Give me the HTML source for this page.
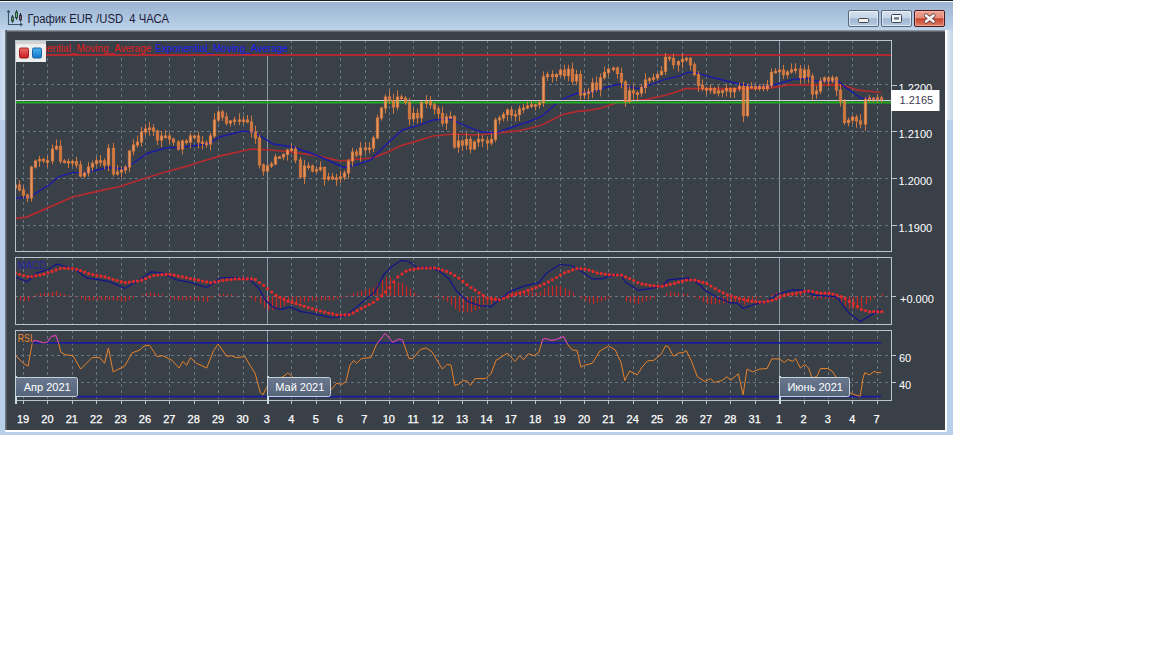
<!DOCTYPE html>
<html><head><meta charset="utf-8">
<style>
html,body{margin:0;padding:0;background:#ffffff;width:1152px;height:648px;overflow:hidden;}
#frame{position:absolute;left:0;top:0;width:953px;height:435px;background:#b9d0ea;}
#topline{position:absolute;left:0;top:0;width:953px;height:1px;background:#1a1c20;}
#whiteline{position:absolute;left:0;top:1px;width:953px;height:1px;background:#f4f8fc;}
#titlebar{position:absolute;left:0;top:2px;width:953px;height:28px;background:linear-gradient(#9ab3d1,#bcd3ea);}
#title{position:absolute;left:27px;top:10px;font-family:"Liberation Sans",sans-serif;font-size:12px;color:#1c1c3a;white-space:pre;}
#panel{position:absolute;left:5px;top:30px;width:940px;height:400px;background:#3a4048;}
#pshadowt{position:absolute;left:5px;top:30px;width:940px;height:2px;background:linear-gradient(#a0a8b0,#4c525a);}
#pshadowl{position:absolute;left:5px;top:30px;width:2px;height:400px;background:linear-gradient(90deg,#7a8088,#4a5058);}
#pwr{position:absolute;left:945px;top:30px;width:2px;height:402px;background:#ffffff;}
#pwb{position:absolute;left:5px;top:430px;width:942px;height:2px;background:#ffffff;}
.btn{position:absolute;top:10px;height:17px;box-sizing:border-box;border:1px solid #56667c;border-radius:2px;box-shadow:inset 0 0 0 1px rgba(255,255,255,0.55);background:linear-gradient(#d6e2f0 0%,#c6d6e8 45%,#9fb7d2 52%,#b6cae0 100%);}
#bclose{border-color:#4a1a1c;box-shadow:inset 0 0 0 1px rgba(255,200,190,0.5);background:linear-gradient(#eea494 0%,#e48c7a 45%,#c8442e 52%,#de8068 100%);}
svg{position:absolute;left:0;top:0;}
</style></head><body>
<div id="frame"></div>
<div id="topline"></div>
<div id="whiteline"></div>
<div id="titlebar"></div>
<div style="position:absolute;left:0;top:30px;width:5px;height:90px;background:linear-gradient(90deg,#c4d6ea,#d4e2f0);"></div>
<div style="position:absolute;left:947px;top:30px;width:6px;height:90px;background:linear-gradient(90deg,#e0eaf4,#c0d4ea);"></div>
<svg width="30" height="30" style="left:0;top:0">
<path d="M8.5,10.5 V24.5 H22" fill="none" stroke="#3c5468" stroke-width="1.1"/>
<path d="M7,12 L8.5,10.3 L10,12 Z M20.5,23 L22.5,24.5 L20.5,26 Z" fill="#3c5468" stroke="#3c5468" stroke-width="0.8"/>
<line x1="12.5" y1="15" x2="12.5" y2="22.8" stroke="#2a3c3a" stroke-width="1.1"/><rect x="11.6" y="17" width="1.8" height="4" fill="#78c888" stroke="#244034" stroke-width="1"/>
<line x1="16.5" y1="10" x2="16.5" y2="19.8" stroke="#2a3c3a" stroke-width="1.1"/><rect x="15.6" y="12.2" width="1.8" height="5.6" fill="#78c888" stroke="#244034" stroke-width="1"/>
<line x1="20.5" y1="13" x2="20.5" y2="21.8" stroke="#2a3040" stroke-width="1.1"/><rect x="19.6" y="15.2" width="1.8" height="4.6" fill="#b07070" stroke="#2c2c40" stroke-width="1"/>
</svg>
<svg width="200" height="30" style="left:0;top:0"><text x="27.5" y="22.7" font-family="Liberation Sans" font-size="12" fill="#1c1c3a" textLength="141.5" lengthAdjust="spacingAndGlyphs" xml:space="preserve">График EUR /USD  4 ЧАСА</text></svg>
<div class="btn" style="left:848px;width:31px;"></div>
<div class="btn" style="left:881px;width:31px;"></div>
<div class="btn" id="bclose" style="left:914px;width:31px;"></div>
<svg width="1152" height="40" style="left:0;top:0">
<rect x="858.5" y="18.5" width="10" height="4" rx="1" fill="#f4f0ea" stroke="#3a4656" stroke-width="1"/>
<rect x="891.5" y="14.5" width="10" height="8" rx="1" fill="#f4f4f4" stroke="#3a4656" stroke-width="1"/>
<rect x="894" y="17.2" width="5" height="2.4" fill="#66758a"/>
<path d="M926,15.5 L933.5,21.5 M933.5,15.5 L926,21.5" stroke="#6a4040" stroke-width="4.2" stroke-linecap="round"/>
<path d="M926,15.5 L933.5,21.5 M933.5,15.5 L926,21.5" stroke="#f8f8f8" stroke-width="2.6" stroke-linecap="round"/>
</svg>
<div id="panel"></div>
<div id="pshadowt"></div>
<div id="pshadowl"></div>
<div id="pwr"></div>
<div id="pwb"></div>
<svg width="1152" height="648" viewBox="0 0 1152 648">
<clipPath id="cm"><rect x="15" y="41" width="876" height="210"/></clipPath>
<clipPath id="cmacd"><rect x="15" y="258" width="876" height="66"/></clipPath>
<clipPath id="crsi"><rect x="15" y="331" width="876" height="69"/></clipPath>
<clipPath id="crsitop"><rect x="15" y="331" width="876" height="11.5"/></clipPath>
<g clip-path="url(#cm)">
<line x1="23.5" y1="40.0" x2="23.5" y2="251.5" stroke="#6a7682" stroke-width="1" stroke-dasharray="3,3"/>
<line x1="47.5" y1="40.0" x2="47.5" y2="251.5" stroke="#6a7682" stroke-width="1" stroke-dasharray="3,3"/>
<line x1="72.5" y1="40.0" x2="72.5" y2="251.5" stroke="#6a7682" stroke-width="1" stroke-dasharray="3,3"/>
<line x1="96.5" y1="40.0" x2="96.5" y2="251.5" stroke="#6a7682" stroke-width="1" stroke-dasharray="3,3"/>
<line x1="121.5" y1="40.0" x2="121.5" y2="251.5" stroke="#6a7682" stroke-width="1" stroke-dasharray="3,3"/>
<line x1="145.5" y1="40.0" x2="145.5" y2="251.5" stroke="#6a7682" stroke-width="1" stroke-dasharray="3,3"/>
<line x1="169.5" y1="40.0" x2="169.5" y2="251.5" stroke="#6a7682" stroke-width="1" stroke-dasharray="3,3"/>
<line x1="194.5" y1="40.0" x2="194.5" y2="251.5" stroke="#6a7682" stroke-width="1" stroke-dasharray="3,3"/>
<line x1="218.5" y1="40.0" x2="218.5" y2="251.5" stroke="#6a7682" stroke-width="1" stroke-dasharray="3,3"/>
<line x1="243.5" y1="40.0" x2="243.5" y2="251.5" stroke="#6a7682" stroke-width="1" stroke-dasharray="3,3"/>
<line x1="267.5" y1="40.5" x2="267.5" y2="251.5" stroke="#8c9aa8" stroke-width="1"/>
<line x1="291.5" y1="40.0" x2="291.5" y2="251.5" stroke="#6a7682" stroke-width="1" stroke-dasharray="3,3"/>
<line x1="316.5" y1="40.0" x2="316.5" y2="251.5" stroke="#6a7682" stroke-width="1" stroke-dasharray="3,3"/>
<line x1="340.5" y1="40.0" x2="340.5" y2="251.5" stroke="#6a7682" stroke-width="1" stroke-dasharray="3,3"/>
<line x1="365.5" y1="40.0" x2="365.5" y2="251.5" stroke="#6a7682" stroke-width="1" stroke-dasharray="3,3"/>
<line x1="389.5" y1="40.0" x2="389.5" y2="251.5" stroke="#6a7682" stroke-width="1" stroke-dasharray="3,3"/>
<line x1="413.5" y1="40.0" x2="413.5" y2="251.5" stroke="#6a7682" stroke-width="1" stroke-dasharray="3,3"/>
<line x1="438.5" y1="40.0" x2="438.5" y2="251.5" stroke="#6a7682" stroke-width="1" stroke-dasharray="3,3"/>
<line x1="462.5" y1="40.0" x2="462.5" y2="251.5" stroke="#6a7682" stroke-width="1" stroke-dasharray="3,3"/>
<line x1="487.5" y1="40.0" x2="487.5" y2="251.5" stroke="#6a7682" stroke-width="1" stroke-dasharray="3,3"/>
<line x1="511.5" y1="40.0" x2="511.5" y2="251.5" stroke="#6a7682" stroke-width="1" stroke-dasharray="3,3"/>
<line x1="535.5" y1="40.0" x2="535.5" y2="251.5" stroke="#6a7682" stroke-width="1" stroke-dasharray="3,3"/>
<line x1="560.5" y1="40.0" x2="560.5" y2="251.5" stroke="#6a7682" stroke-width="1" stroke-dasharray="3,3"/>
<line x1="584.5" y1="40.0" x2="584.5" y2="251.5" stroke="#6a7682" stroke-width="1" stroke-dasharray="3,3"/>
<line x1="608.5" y1="40.0" x2="608.5" y2="251.5" stroke="#6a7682" stroke-width="1" stroke-dasharray="3,3"/>
<line x1="633.5" y1="40.0" x2="633.5" y2="251.5" stroke="#6a7682" stroke-width="1" stroke-dasharray="3,3"/>
<line x1="657.5" y1="40.0" x2="657.5" y2="251.5" stroke="#6a7682" stroke-width="1" stroke-dasharray="3,3"/>
<line x1="682.5" y1="40.0" x2="682.5" y2="251.5" stroke="#6a7682" stroke-width="1" stroke-dasharray="3,3"/>
<line x1="706.5" y1="40.0" x2="706.5" y2="251.5" stroke="#6a7682" stroke-width="1" stroke-dasharray="3,3"/>
<line x1="730.5" y1="40.0" x2="730.5" y2="251.5" stroke="#6a7682" stroke-width="1" stroke-dasharray="3,3"/>
<line x1="755.5" y1="40.0" x2="755.5" y2="251.5" stroke="#6a7682" stroke-width="1" stroke-dasharray="3,3"/>
<line x1="779.5" y1="40.5" x2="779.5" y2="251.5" stroke="#8c9aa8" stroke-width="1"/>
<line x1="804.5" y1="40.0" x2="804.5" y2="251.5" stroke="#6a7682" stroke-width="1" stroke-dasharray="3,3"/>
<line x1="828.5" y1="40.0" x2="828.5" y2="251.5" stroke="#6a7682" stroke-width="1" stroke-dasharray="3,3"/>
<line x1="852.5" y1="40.0" x2="852.5" y2="251.5" stroke="#6a7682" stroke-width="1" stroke-dasharray="3,3"/>
<line x1="877.5" y1="40.0" x2="877.5" y2="251.5" stroke="#6a7682" stroke-width="1" stroke-dasharray="3,3"/>
<line x1="15.0" y1="84.5" x2="891.5" y2="84.5" stroke="#6a7682" stroke-width="1" stroke-dasharray="3,3"/>
<line x1="15.0" y1="131.5" x2="891.5" y2="131.5" stroke="#6a7682" stroke-width="1" stroke-dasharray="3,3"/>
<line x1="15.0" y1="178.5" x2="891.5" y2="178.5" stroke="#6a7682" stroke-width="1" stroke-dasharray="3,3"/>
<line x1="15.0" y1="225.5" x2="891.5" y2="225.5" stroke="#6a7682" stroke-width="1" stroke-dasharray="3,3"/>
<rect x="46" y="41" width="244" height="15" fill="#3a4048"/>
<polyline points="15.6,218.5 26.7,217.1 48.9,207.4 72.5,197.0 90.6,192.8 110.0,188.6 122.0,186.0 144.0,178.5 165.5,172.0 189.0,165.6 200.0,162.0 221.6,155.6 251.8,149.0 271.0,150.0 290.7,152.0 316.6,155.6 340.4,161.0 359.8,159.0 372.8,157.8 388.0,152.0 400.0,146.0 411.6,142.6 433.0,136.0 454.8,134.0 476.4,135.0 498.0,133.0 519.6,130.7 541.2,125.3 562.8,114.5 578.0,111.3 590.0,110.2 601.6,108.0 616.7,102.6 629.7,101.1 647.0,99.4 666.4,95.0 685.8,88.6 709.6,88.6 752.8,88.6 771.6,87.8 788.6,84.8 839.5,84.8 845.7,86.3 858.0,90.2 881.2,92.5" fill="none" stroke="#b42a2e" stroke-width="1.7"/>
<polyline points="15.6,198.3 27.4,197.0 30.8,196.3 48.9,185.0 58.6,176.8 72.5,172.6 86.4,172.6 100.3,169.2 110.0,167.5 122.0,169.0 131.0,164.5 148.0,153.0 165.5,148.0 183.0,147.0 200.0,145.0 210.0,143.0 219.4,137.0 243.0,131.0 254.0,132.0 273.0,144.0 293.0,147.0 314.5,154.5 329.6,161.0 343.6,167.5 355.5,165.0 370.6,160.0 385.7,145.0 400.0,132.0 403.0,129.6 418.0,125.3 433.0,120.0 450.5,118.8 461.3,124.2 480.7,131.8 495.8,132.9 511.0,127.5 528.0,122.0 541.0,116.7 556.3,103.7 567.0,97.2 578.0,93.0 593.0,91.8 606.0,87.5 617.8,84.3 627.5,86.4 638.3,88.6 651.3,84.3 666.4,78.9 677.2,76.7 688.0,72.4 694.5,72.4 709.6,76.7 726.9,81.0 739.8,84.3 752.8,86.4 767.9,86.4 780.0,83.2 793.2,79.4 808.6,78.3 814.8,80.9 838.0,80.9 844.1,86.3 861.1,98.3 881.2,98.6" fill="none" stroke="#1a1aa8" stroke-width="1.4"/>
<line x1="15" y1="55" x2="891" y2="55" stroke="#ae2a30" stroke-width="1.8"/>
<line x1="15" y1="100.5" x2="891" y2="100.5" stroke="#d2d6da" stroke-width="1"/>
<line x1="15" y1="102.5" x2="891" y2="102.5" stroke="#20ac20" stroke-width="2"/>
<g opacity="0.86"><line x1="15.5" y1="182.1" x2="15.5" y2="189.9" stroke="#e8803c" stroke-width="1"/><rect x="14.4" y="185.0" width="2.2" height="3.0" fill="#f8a868" stroke="#f08440" stroke-width="1"/><line x1="19.5" y1="180.1" x2="19.5" y2="191.4" stroke="#e8803c" stroke-width="1"/><rect x="18.4" y="185.0" width="2.2" height="5.0" fill="none" stroke="#f08440" stroke-width="1"/><line x1="23.5" y1="185.8" x2="23.5" y2="198.2" stroke="#e8803c" stroke-width="1"/><rect x="22.4" y="190.0" width="2.2" height="5.0" fill="none" stroke="#f08440" stroke-width="1"/><line x1="27.5" y1="193.7" x2="27.5" y2="202.0" stroke="#e8803c" stroke-width="1"/><rect x="26.4" y="195.0" width="2.2" height="3.0" fill="none" stroke="#f08440" stroke-width="1"/><line x1="31.5" y1="165.8" x2="31.5" y2="201.6" stroke="#e8803c" stroke-width="1"/><rect x="30.4" y="167.0" width="2.2" height="31.0" fill="#f8a868" stroke="#f08440" stroke-width="1"/><line x1="35.5" y1="159.6" x2="35.5" y2="168.5" stroke="#e8803c" stroke-width="1"/><rect x="34.4" y="161.0" width="2.2" height="6.0" fill="#f8a868" stroke="#f08440" stroke-width="1"/><line x1="39.5" y1="155.9" x2="39.5" y2="167.0" stroke="#e8803c" stroke-width="1"/><rect x="38.4" y="159.4" width="2.2" height="1.6" fill="#f8a868" stroke="#f08440" stroke-width="1"/><line x1="43.5" y1="157.7" x2="43.5" y2="163.1" stroke="#e8803c" stroke-width="1"/><rect x="42.4" y="159.4" width="2.2" height="1.5" fill="none" stroke="#f08440" stroke-width="1"/><line x1="47.5" y1="156.0" x2="47.5" y2="167.5" stroke="#e8803c" stroke-width="1"/><rect x="46.4" y="160.8" width="2.2" height="1.5" fill="#f8a868" stroke="#f08440" stroke-width="1"/><line x1="52.5" y1="144.5" x2="52.5" y2="164.2" stroke="#e8803c" stroke-width="1"/><rect x="51.4" y="149.0" width="2.2" height="11.8" fill="#f8a868" stroke="#f08440" stroke-width="1"/><line x1="56.5" y1="139.4" x2="56.5" y2="150.3" stroke="#e8803c" stroke-width="1"/><rect x="55.4" y="146.3" width="2.2" height="2.7" fill="#f8a868" stroke="#f08440" stroke-width="1"/><line x1="60.5" y1="140.1" x2="60.5" y2="163.7" stroke="#e8803c" stroke-width="1"/><rect x="59.4" y="146.3" width="2.2" height="14.7" fill="none" stroke="#f08440" stroke-width="1"/><line x1="64.5" y1="159.1" x2="64.5" y2="163.7" stroke="#e8803c" stroke-width="1"/><rect x="63.4" y="161.0" width="2.2" height="1.5" fill="none" stroke="#f08440" stroke-width="1"/><line x1="68.5" y1="158.6" x2="68.5" y2="167.9" stroke="#e8803c" stroke-width="1"/><rect x="67.4" y="161.5" width="2.2" height="1.5" fill="#f8a868" stroke="#f08440" stroke-width="1"/><line x1="72.5" y1="159.4" x2="72.5" y2="166.0" stroke="#e8803c" stroke-width="1"/><rect x="71.4" y="161.5" width="2.2" height="1.5" fill="#f8a868" stroke="#f08440" stroke-width="1"/><line x1="76.5" y1="156.7" x2="76.5" y2="168.2" stroke="#e8803c" stroke-width="1"/><rect x="75.4" y="161.5" width="2.2" height="3.5" fill="none" stroke="#f08440" stroke-width="1"/><line x1="80.5" y1="160.7" x2="80.5" y2="177.4" stroke="#e8803c" stroke-width="1"/><rect x="79.4" y="165.0" width="2.2" height="11.0" fill="none" stroke="#f08440" stroke-width="1"/><line x1="84.5" y1="171.6" x2="84.5" y2="178.2" stroke="#e8803c" stroke-width="1"/><rect x="83.4" y="173.0" width="2.2" height="3.0" fill="#f8a868" stroke="#f08440" stroke-width="1"/><line x1="88.5" y1="161.9" x2="88.5" y2="176.6" stroke="#e8803c" stroke-width="1"/><rect x="87.4" y="167.0" width="2.2" height="6.0" fill="#f8a868" stroke="#f08440" stroke-width="1"/><line x1="92.5" y1="160.7" x2="92.5" y2="171.5" stroke="#e8803c" stroke-width="1"/><rect x="91.4" y="163.6" width="2.2" height="3.4" fill="#f8a868" stroke="#f08440" stroke-width="1"/><line x1="96.5" y1="157.1" x2="96.5" y2="166.4" stroke="#e8803c" stroke-width="1"/><rect x="95.4" y="160.8" width="2.2" height="2.8" fill="#f8a868" stroke="#f08440" stroke-width="1"/><line x1="100.5" y1="155.0" x2="100.5" y2="166.0" stroke="#e8803c" stroke-width="1"/><rect x="99.4" y="160.8" width="2.2" height="1.5" fill="#f8a868" stroke="#f08440" stroke-width="1"/><line x1="104.5" y1="158.3" x2="104.5" y2="169.4" stroke="#e8803c" stroke-width="1"/><rect x="103.4" y="160.8" width="2.2" height="4.2" fill="none" stroke="#f08440" stroke-width="1"/><line x1="108.5" y1="144.1" x2="108.5" y2="171.3" stroke="#e8803c" stroke-width="1"/><rect x="107.4" y="148.3" width="2.2" height="16.7" fill="#f8a868" stroke="#f08440" stroke-width="1"/><line x1="113.5" y1="142.9" x2="113.5" y2="176.7" stroke="#e8803c" stroke-width="1"/><rect x="112.4" y="148.3" width="2.2" height="25.7" fill="none" stroke="#f08440" stroke-width="1"/><line x1="117.5" y1="165.1" x2="117.5" y2="175.7" stroke="#e8803c" stroke-width="1"/><rect x="116.4" y="172.0" width="2.2" height="2.0" fill="#f8a868" stroke="#f08440" stroke-width="1"/><line x1="121.5" y1="166.5" x2="121.5" y2="177.5" stroke="#e8803c" stroke-width="1"/><rect x="120.4" y="170.0" width="2.2" height="2.0" fill="#f8a868" stroke="#f08440" stroke-width="1"/><line x1="125.5" y1="165.1" x2="125.5" y2="173.9" stroke="#e8803c" stroke-width="1"/><rect x="124.4" y="167.0" width="2.2" height="3.0" fill="#f8a868" stroke="#f08440" stroke-width="1"/><line x1="129.5" y1="149.8" x2="129.5" y2="172.0" stroke="#e8803c" stroke-width="1"/><rect x="128.4" y="151.0" width="2.2" height="16.0" fill="#f8a868" stroke="#f08440" stroke-width="1"/><line x1="133.5" y1="139.4" x2="133.5" y2="155.4" stroke="#e8803c" stroke-width="1"/><rect x="132.4" y="145.0" width="2.2" height="6.0" fill="#f8a868" stroke="#f08440" stroke-width="1"/><line x1="137.5" y1="135.7" x2="137.5" y2="147.9" stroke="#e8803c" stroke-width="1"/><rect x="136.4" y="142.0" width="2.2" height="3.0" fill="#f8a868" stroke="#f08440" stroke-width="1"/><line x1="141.5" y1="126.8" x2="141.5" y2="146.6" stroke="#e8803c" stroke-width="1"/><rect x="140.4" y="132.0" width="2.2" height="10.0" fill="#f8a868" stroke="#f08440" stroke-width="1"/><line x1="145.5" y1="124.5" x2="145.5" y2="135.7" stroke="#e8803c" stroke-width="1"/><rect x="144.4" y="129.0" width="2.2" height="3.0" fill="#f8a868" stroke="#f08440" stroke-width="1"/><line x1="149.5" y1="122.0" x2="149.5" y2="135.7" stroke="#e8803c" stroke-width="1"/><rect x="148.4" y="128.0" width="2.2" height="1.5" fill="#f8a868" stroke="#f08440" stroke-width="1"/><line x1="153.5" y1="124.2" x2="153.5" y2="136.0" stroke="#e8803c" stroke-width="1"/><rect x="152.4" y="128.0" width="2.2" height="3.0" fill="none" stroke="#f08440" stroke-width="1"/><line x1="157.5" y1="129.6" x2="157.5" y2="145.2" stroke="#e8803c" stroke-width="1"/><rect x="156.4" y="131.0" width="2.2" height="9.0" fill="none" stroke="#f08440" stroke-width="1"/><line x1="161.5" y1="131.1" x2="161.5" y2="147.0" stroke="#e8803c" stroke-width="1"/><rect x="160.4" y="136.0" width="2.2" height="4.0" fill="#f8a868" stroke="#f08440" stroke-width="1"/><line x1="165.5" y1="130.1" x2="165.5" y2="138.7" stroke="#e8803c" stroke-width="1"/><rect x="164.4" y="136.0" width="2.2" height="1.5" fill="#f8a868" stroke="#f08440" stroke-width="1"/><line x1="169.5" y1="132.7" x2="169.5" y2="144.0" stroke="#e8803c" stroke-width="1"/><rect x="168.4" y="136.0" width="2.2" height="3.0" fill="none" stroke="#f08440" stroke-width="1"/><line x1="173.5" y1="137.9" x2="173.5" y2="145.8" stroke="#e8803c" stroke-width="1"/><rect x="172.4" y="139.0" width="2.2" height="3.0" fill="none" stroke="#f08440" stroke-width="1"/><line x1="178.5" y1="140.0" x2="178.5" y2="150.7" stroke="#e8803c" stroke-width="1"/><rect x="177.4" y="142.0" width="2.2" height="7.0" fill="none" stroke="#f08440" stroke-width="1"/><line x1="182.5" y1="139.6" x2="182.5" y2="154.6" stroke="#e8803c" stroke-width="1"/><rect x="181.4" y="141.0" width="2.2" height="8.0" fill="#f8a868" stroke="#f08440" stroke-width="1"/><line x1="186.5" y1="139.2" x2="186.5" y2="144.5" stroke="#e8803c" stroke-width="1"/><rect x="185.4" y="141.0" width="2.2" height="1.5" fill="none" stroke="#f08440" stroke-width="1"/><line x1="190.5" y1="132.7" x2="190.5" y2="148.2" stroke="#e8803c" stroke-width="1"/><rect x="189.4" y="136.0" width="2.2" height="6.0" fill="#f8a868" stroke="#f08440" stroke-width="1"/><line x1="194.5" y1="134.5" x2="194.5" y2="139.7" stroke="#e8803c" stroke-width="1"/><rect x="193.4" y="136.0" width="2.2" height="1.5" fill="#f8a868" stroke="#f08440" stroke-width="1"/><line x1="198.5" y1="131.7" x2="198.5" y2="148.3" stroke="#e8803c" stroke-width="1"/><rect x="197.4" y="136.0" width="2.2" height="6.0" fill="none" stroke="#f08440" stroke-width="1"/><line x1="202.5" y1="136.1" x2="202.5" y2="149.2" stroke="#e8803c" stroke-width="1"/><rect x="201.4" y="142.0" width="2.2" height="1.5" fill="none" stroke="#f08440" stroke-width="1"/><line x1="206.5" y1="140.3" x2="206.5" y2="147.5" stroke="#e8803c" stroke-width="1"/><rect x="205.4" y="143.0" width="2.2" height="1.5" fill="none" stroke="#f08440" stroke-width="1"/><line x1="210.5" y1="132.8" x2="210.5" y2="150.3" stroke="#e8803c" stroke-width="1"/><rect x="209.4" y="136.0" width="2.2" height="8.0" fill="#f8a868" stroke="#f08440" stroke-width="1"/><line x1="214.5" y1="113.3" x2="214.5" y2="137.9" stroke="#e8803c" stroke-width="1"/><rect x="213.4" y="120.0" width="2.2" height="16.0" fill="#f8a868" stroke="#f08440" stroke-width="1"/><line x1="218.5" y1="109.9" x2="218.5" y2="122.4" stroke="#e8803c" stroke-width="1"/><rect x="217.4" y="112.0" width="2.2" height="8.0" fill="#f8a868" stroke="#f08440" stroke-width="1"/><line x1="222.5" y1="109.6" x2="222.5" y2="120.9" stroke="#e8803c" stroke-width="1"/><rect x="221.4" y="112.0" width="2.2" height="5.0" fill="none" stroke="#f08440" stroke-width="1"/><line x1="226.5" y1="112.5" x2="226.5" y2="125.6" stroke="#e8803c" stroke-width="1"/><rect x="225.4" y="117.0" width="2.2" height="6.0" fill="none" stroke="#f08440" stroke-width="1"/><line x1="230.5" y1="120.0" x2="230.5" y2="126.5" stroke="#e8803c" stroke-width="1"/><rect x="229.4" y="121.0" width="2.2" height="2.0" fill="#f8a868" stroke="#f08440" stroke-width="1"/><line x1="234.5" y1="116.8" x2="234.5" y2="125.4" stroke="#e8803c" stroke-width="1"/><rect x="233.4" y="120.0" width="2.2" height="1.5" fill="#f8a868" stroke="#f08440" stroke-width="1"/><line x1="239.5" y1="113.3" x2="239.5" y2="125.1" stroke="#e8803c" stroke-width="1"/><rect x="238.4" y="120.0" width="2.2" height="1.5" fill="#f8a868" stroke="#f08440" stroke-width="1"/><line x1="243.5" y1="115.9" x2="243.5" y2="124.7" stroke="#e8803c" stroke-width="1"/><rect x="242.4" y="120.0" width="2.2" height="1.5" fill="#f8a868" stroke="#f08440" stroke-width="1"/><line x1="247.5" y1="114.9" x2="247.5" y2="123.3" stroke="#e8803c" stroke-width="1"/><rect x="246.4" y="120.0" width="2.2" height="2.0" fill="none" stroke="#f08440" stroke-width="1"/><line x1="251.5" y1="115.6" x2="251.5" y2="137.7" stroke="#e8803c" stroke-width="1"/><rect x="250.4" y="122.0" width="2.2" height="10.0" fill="none" stroke="#f08440" stroke-width="1"/><line x1="255.5" y1="125.8" x2="255.5" y2="143.8" stroke="#e8803c" stroke-width="1"/><rect x="254.4" y="132.0" width="2.2" height="6.0" fill="none" stroke="#f08440" stroke-width="1"/><line x1="259.5" y1="134.6" x2="259.5" y2="168.4" stroke="#e8803c" stroke-width="1"/><rect x="258.4" y="138.0" width="2.2" height="27.0" fill="none" stroke="#f08440" stroke-width="1"/><line x1="263.5" y1="163.4" x2="263.5" y2="175.8" stroke="#e8803c" stroke-width="1"/><rect x="262.4" y="165.0" width="2.2" height="6.0" fill="none" stroke="#f08440" stroke-width="1"/><line x1="267.5" y1="164.6" x2="267.5" y2="172.4" stroke="#e8803c" stroke-width="1"/><rect x="266.4" y="166.0" width="2.2" height="5.0" fill="#f8a868" stroke="#f08440" stroke-width="1"/><line x1="271.5" y1="161.7" x2="271.5" y2="168.0" stroke="#e8803c" stroke-width="1"/><rect x="270.4" y="164.0" width="2.2" height="2.0" fill="#f8a868" stroke="#f08440" stroke-width="1"/><line x1="275.5" y1="154.0" x2="275.5" y2="165.3" stroke="#e8803c" stroke-width="1"/><rect x="274.4" y="157.0" width="2.2" height="7.0" fill="#f8a868" stroke="#f08440" stroke-width="1"/><line x1="279.5" y1="156.0" x2="279.5" y2="158.9" stroke="#e8803c" stroke-width="1"/><rect x="278.4" y="157.0" width="2.2" height="1.5" fill="#f8a868" stroke="#f08440" stroke-width="1"/><line x1="283.5" y1="152.9" x2="283.5" y2="160.2" stroke="#e8803c" stroke-width="1"/><rect x="282.4" y="154.5" width="2.2" height="2.5" fill="#f8a868" stroke="#f08440" stroke-width="1"/><line x1="287.5" y1="148.8" x2="287.5" y2="160.7" stroke="#e8803c" stroke-width="1"/><rect x="286.4" y="150.0" width="2.2" height="4.5" fill="#f8a868" stroke="#f08440" stroke-width="1"/><line x1="291.5" y1="144.3" x2="291.5" y2="151.9" stroke="#e8803c" stroke-width="1"/><rect x="290.4" y="149.0" width="2.2" height="1.5" fill="#f8a868" stroke="#f08440" stroke-width="1"/><line x1="295.5" y1="146.5" x2="295.5" y2="163.1" stroke="#e8803c" stroke-width="1"/><rect x="294.4" y="149.0" width="2.2" height="11.0" fill="none" stroke="#f08440" stroke-width="1"/><line x1="300.5" y1="156.8" x2="300.5" y2="178.7" stroke="#e8803c" stroke-width="1"/><rect x="299.4" y="160.0" width="2.2" height="17.0" fill="none" stroke="#f08440" stroke-width="1"/><line x1="304.5" y1="159.9" x2="304.5" y2="184.0" stroke="#e8803c" stroke-width="1"/><rect x="303.4" y="166.0" width="2.2" height="11.0" fill="#f8a868" stroke="#f08440" stroke-width="1"/><line x1="308.5" y1="162.2" x2="308.5" y2="169.9" stroke="#e8803c" stroke-width="1"/><rect x="307.4" y="166.0" width="2.2" height="1.5" fill="#f8a868" stroke="#f08440" stroke-width="1"/><line x1="312.5" y1="164.5" x2="312.5" y2="172.6" stroke="#e8803c" stroke-width="1"/><rect x="311.4" y="166.0" width="2.2" height="5.0" fill="none" stroke="#f08440" stroke-width="1"/><line x1="316.5" y1="166.5" x2="316.5" y2="173.6" stroke="#e8803c" stroke-width="1"/><rect x="315.4" y="169.6" width="2.2" height="1.5" fill="#f8a868" stroke="#f08440" stroke-width="1"/><line x1="320.5" y1="161.5" x2="320.5" y2="171.6" stroke="#e8803c" stroke-width="1"/><rect x="319.4" y="167.5" width="2.2" height="2.1" fill="#f8a868" stroke="#f08440" stroke-width="1"/><line x1="324.5" y1="166.4" x2="324.5" y2="185.7" stroke="#e8803c" stroke-width="1"/><rect x="323.4" y="167.5" width="2.2" height="11.5" fill="none" stroke="#f08440" stroke-width="1"/><line x1="328.5" y1="172.8" x2="328.5" y2="180.9" stroke="#e8803c" stroke-width="1"/><rect x="327.4" y="177.0" width="2.2" height="2.0" fill="#f8a868" stroke="#f08440" stroke-width="1"/><line x1="332.5" y1="172.7" x2="332.5" y2="180.2" stroke="#e8803c" stroke-width="1"/><rect x="331.4" y="177.0" width="2.2" height="2.0" fill="none" stroke="#f08440" stroke-width="1"/><line x1="336.5" y1="173.8" x2="336.5" y2="185.9" stroke="#e8803c" stroke-width="1"/><rect x="335.4" y="178.0" width="2.2" height="1.5" fill="#f8a868" stroke="#f08440" stroke-width="1"/><line x1="340.5" y1="170.8" x2="340.5" y2="183.2" stroke="#e8803c" stroke-width="1"/><rect x="339.4" y="177.0" width="2.2" height="1.5" fill="#f8a868" stroke="#f08440" stroke-width="1"/><line x1="344.5" y1="170.4" x2="344.5" y2="180.2" stroke="#e8803c" stroke-width="1"/><rect x="343.4" y="173.0" width="2.2" height="4.0" fill="#f8a868" stroke="#f08440" stroke-width="1"/><line x1="348.5" y1="159.0" x2="348.5" y2="178.6" stroke="#e8803c" stroke-width="1"/><rect x="347.4" y="161.0" width="2.2" height="12.0" fill="#f8a868" stroke="#f08440" stroke-width="1"/><line x1="352.5" y1="147.8" x2="352.5" y2="166.7" stroke="#e8803c" stroke-width="1"/><rect x="351.4" y="152.0" width="2.2" height="9.0" fill="#f8a868" stroke="#f08440" stroke-width="1"/><line x1="356.5" y1="149.0" x2="356.5" y2="157.3" stroke="#e8803c" stroke-width="1"/><rect x="355.4" y="152.0" width="2.2" height="3.0" fill="none" stroke="#f08440" stroke-width="1"/><line x1="360.5" y1="142.1" x2="360.5" y2="161.9" stroke="#e8803c" stroke-width="1"/><rect x="359.4" y="148.0" width="2.2" height="7.0" fill="#f8a868" stroke="#f08440" stroke-width="1"/><line x1="365.5" y1="141.9" x2="365.5" y2="153.8" stroke="#e8803c" stroke-width="1"/><rect x="364.4" y="148.0" width="2.2" height="1.5" fill="#f8a868" stroke="#f08440" stroke-width="1"/><line x1="369.5" y1="142.1" x2="369.5" y2="153.4" stroke="#e8803c" stroke-width="1"/><rect x="368.4" y="148.0" width="2.2" height="1.5" fill="#f8a868" stroke="#f08440" stroke-width="1"/><line x1="373.5" y1="135.6" x2="373.5" y2="152.1" stroke="#e8803c" stroke-width="1"/><rect x="372.4" y="138.0" width="2.2" height="10.0" fill="#f8a868" stroke="#f08440" stroke-width="1"/><line x1="377.5" y1="114.9" x2="377.5" y2="139.2" stroke="#e8803c" stroke-width="1"/><rect x="376.4" y="118.0" width="2.2" height="20.0" fill="#f8a868" stroke="#f08440" stroke-width="1"/><line x1="381.5" y1="106.8" x2="381.5" y2="120.7" stroke="#e8803c" stroke-width="1"/><rect x="380.4" y="108.0" width="2.2" height="10.0" fill="#f8a868" stroke="#f08440" stroke-width="1"/><line x1="385.5" y1="94.4" x2="385.5" y2="113.2" stroke="#e8803c" stroke-width="1"/><rect x="384.4" y="97.0" width="2.2" height="11.0" fill="#f8a868" stroke="#f08440" stroke-width="1"/><line x1="389.5" y1="90.3" x2="389.5" y2="104.2" stroke="#e8803c" stroke-width="1"/><rect x="388.4" y="97.0" width="2.2" height="3.5" fill="none" stroke="#f08440" stroke-width="1"/><line x1="393.5" y1="93.9" x2="393.5" y2="113.9" stroke="#e8803c" stroke-width="1"/><rect x="392.4" y="100.5" width="2.2" height="6.5" fill="none" stroke="#f08440" stroke-width="1"/><line x1="397.5" y1="90.3" x2="397.5" y2="110.2" stroke="#e8803c" stroke-width="1"/><rect x="396.4" y="97.0" width="2.2" height="10.0" fill="#f8a868" stroke="#f08440" stroke-width="1"/><line x1="401.5" y1="94.7" x2="401.5" y2="100.7" stroke="#e8803c" stroke-width="1"/><rect x="400.4" y="97.0" width="2.2" height="1.5" fill="none" stroke="#f08440" stroke-width="1"/><line x1="405.5" y1="96.1" x2="405.5" y2="104.8" stroke="#e8803c" stroke-width="1"/><rect x="404.4" y="98.3" width="2.2" height="4.3" fill="none" stroke="#f08440" stroke-width="1"/><line x1="409.5" y1="97.9" x2="409.5" y2="125.2" stroke="#e8803c" stroke-width="1"/><rect x="408.4" y="102.6" width="2.2" height="16.2" fill="none" stroke="#f08440" stroke-width="1"/><line x1="413.5" y1="107.4" x2="413.5" y2="122.7" stroke="#e8803c" stroke-width="1"/><rect x="412.4" y="113.4" width="2.2" height="5.4" fill="#f8a868" stroke="#f08440" stroke-width="1"/><line x1="417.5" y1="108.5" x2="417.5" y2="123.6" stroke="#e8803c" stroke-width="1"/><rect x="416.4" y="113.4" width="2.2" height="4.4" fill="none" stroke="#f08440" stroke-width="1"/><line x1="421.5" y1="101.1" x2="421.5" y2="122.8" stroke="#e8803c" stroke-width="1"/><rect x="420.4" y="102.6" width="2.2" height="15.2" fill="#f8a868" stroke="#f08440" stroke-width="1"/><line x1="426.5" y1="95.1" x2="426.5" y2="108.3" stroke="#e8803c" stroke-width="1"/><rect x="425.4" y="101.6" width="2.2" height="1.5" fill="#f8a868" stroke="#f08440" stroke-width="1"/><line x1="430.5" y1="96.1" x2="430.5" y2="108.7" stroke="#e8803c" stroke-width="1"/><rect x="429.4" y="101.6" width="2.2" height="3.2" fill="none" stroke="#f08440" stroke-width="1"/><line x1="434.5" y1="102.7" x2="434.5" y2="114.7" stroke="#e8803c" stroke-width="1"/><rect x="433.4" y="104.8" width="2.2" height="4.2" fill="none" stroke="#f08440" stroke-width="1"/><line x1="438.5" y1="106.0" x2="438.5" y2="119.2" stroke="#e8803c" stroke-width="1"/><rect x="437.4" y="109.0" width="2.2" height="4.4" fill="none" stroke="#f08440" stroke-width="1"/><line x1="442.5" y1="106.6" x2="442.5" y2="126.4" stroke="#e8803c" stroke-width="1"/><rect x="441.4" y="113.4" width="2.2" height="9.6" fill="none" stroke="#f08440" stroke-width="1"/><line x1="446.5" y1="113.6" x2="446.5" y2="129.7" stroke="#e8803c" stroke-width="1"/><rect x="445.4" y="117.0" width="2.2" height="6.0" fill="#f8a868" stroke="#f08440" stroke-width="1"/><line x1="450.5" y1="111.4" x2="450.5" y2="119.0" stroke="#e8803c" stroke-width="1"/><rect x="449.4" y="116.7" width="2.2" height="1.5" fill="#f8a868" stroke="#f08440" stroke-width="1"/><line x1="454.5" y1="114.9" x2="454.5" y2="148.9" stroke="#e8803c" stroke-width="1"/><rect x="453.4" y="116.7" width="2.2" height="30.3" fill="none" stroke="#f08440" stroke-width="1"/><line x1="458.5" y1="134.6" x2="458.5" y2="152.8" stroke="#e8803c" stroke-width="1"/><rect x="457.4" y="141.0" width="2.2" height="6.0" fill="#f8a868" stroke="#f08440" stroke-width="1"/><line x1="462.5" y1="139.1" x2="462.5" y2="151.0" stroke="#e8803c" stroke-width="1"/><rect x="461.4" y="141.0" width="2.2" height="4.0" fill="none" stroke="#f08440" stroke-width="1"/><line x1="466.5" y1="132.5" x2="466.5" y2="149.9" stroke="#e8803c" stroke-width="1"/><rect x="465.4" y="139.4" width="2.2" height="5.6" fill="#f8a868" stroke="#f08440" stroke-width="1"/><line x1="470.5" y1="136.3" x2="470.5" y2="153.3" stroke="#e8803c" stroke-width="1"/><rect x="469.4" y="139.4" width="2.2" height="9.6" fill="none" stroke="#f08440" stroke-width="1"/><line x1="474.5" y1="140.2" x2="474.5" y2="150.1" stroke="#e8803c" stroke-width="1"/><rect x="473.4" y="142.0" width="2.2" height="7.0" fill="#f8a868" stroke="#f08440" stroke-width="1"/><line x1="478.5" y1="132.6" x2="478.5" y2="146.9" stroke="#e8803c" stroke-width="1"/><rect x="477.4" y="139.4" width="2.2" height="2.6" fill="#f8a868" stroke="#f08440" stroke-width="1"/><line x1="482.5" y1="135.2" x2="482.5" y2="147.0" stroke="#e8803c" stroke-width="1"/><rect x="481.4" y="139.4" width="2.2" height="1.5" fill="none" stroke="#f08440" stroke-width="1"/><line x1="487.5" y1="136.8" x2="487.5" y2="149.2" stroke="#e8803c" stroke-width="1"/><rect x="486.4" y="140.4" width="2.2" height="2.6" fill="none" stroke="#f08440" stroke-width="1"/><line x1="491.5" y1="133.4" x2="491.5" y2="145.3" stroke="#e8803c" stroke-width="1"/><rect x="490.4" y="139.4" width="2.2" height="3.6" fill="#f8a868" stroke="#f08440" stroke-width="1"/><line x1="495.5" y1="117.5" x2="495.5" y2="142.2" stroke="#e8803c" stroke-width="1"/><rect x="494.4" y="120.0" width="2.2" height="19.4" fill="#f8a868" stroke="#f08440" stroke-width="1"/><line x1="499.5" y1="115.6" x2="499.5" y2="124.5" stroke="#e8803c" stroke-width="1"/><rect x="498.4" y="118.0" width="2.2" height="2.0" fill="#f8a868" stroke="#f08440" stroke-width="1"/><line x1="503.5" y1="111.9" x2="503.5" y2="121.5" stroke="#e8803c" stroke-width="1"/><rect x="502.4" y="114.5" width="2.2" height="3.5" fill="#f8a868" stroke="#f08440" stroke-width="1"/><line x1="507.5" y1="108.2" x2="507.5" y2="121.0" stroke="#e8803c" stroke-width="1"/><rect x="506.4" y="110.0" width="2.2" height="4.5" fill="#f8a868" stroke="#f08440" stroke-width="1"/><line x1="511.5" y1="106.9" x2="511.5" y2="118.7" stroke="#e8803c" stroke-width="1"/><rect x="510.4" y="110.0" width="2.2" height="5.0" fill="none" stroke="#f08440" stroke-width="1"/><line x1="515.5" y1="110.0" x2="515.5" y2="121.4" stroke="#e8803c" stroke-width="1"/><rect x="514.4" y="114.5" width="2.2" height="1.5" fill="#f8a868" stroke="#f08440" stroke-width="1"/><line x1="519.5" y1="105.5" x2="519.5" y2="121.0" stroke="#e8803c" stroke-width="1"/><rect x="518.4" y="109.0" width="2.2" height="5.5" fill="#f8a868" stroke="#f08440" stroke-width="1"/><line x1="523.5" y1="104.0" x2="523.5" y2="113.2" stroke="#e8803c" stroke-width="1"/><rect x="522.4" y="108.0" width="2.2" height="1.5" fill="#f8a868" stroke="#f08440" stroke-width="1"/><line x1="527.5" y1="101.9" x2="527.5" y2="109.1" stroke="#e8803c" stroke-width="1"/><rect x="526.4" y="106.0" width="2.2" height="2.0" fill="#f8a868" stroke="#f08440" stroke-width="1"/><line x1="531.5" y1="101.2" x2="531.5" y2="108.1" stroke="#e8803c" stroke-width="1"/><rect x="530.4" y="104.8" width="2.2" height="1.5" fill="#f8a868" stroke="#f08440" stroke-width="1"/><line x1="535.5" y1="103.8" x2="535.5" y2="110.6" stroke="#e8803c" stroke-width="1"/><rect x="534.4" y="104.8" width="2.2" height="1.5" fill="#f8a868" stroke="#f08440" stroke-width="1"/><line x1="539.5" y1="100.6" x2="539.5" y2="108.6" stroke="#e8803c" stroke-width="1"/><rect x="538.4" y="102.6" width="2.2" height="2.2" fill="#f8a868" stroke="#f08440" stroke-width="1"/><line x1="543.5" y1="71.3" x2="543.5" y2="106.9" stroke="#e8803c" stroke-width="1"/><rect x="542.4" y="76.7" width="2.2" height="25.9" fill="#f8a868" stroke="#f08440" stroke-width="1"/><line x1="547.5" y1="71.6" x2="547.5" y2="80.8" stroke="#e8803c" stroke-width="1"/><rect x="546.4" y="74.6" width="2.2" height="2.1" fill="#f8a868" stroke="#f08440" stroke-width="1"/><line x1="552.5" y1="70.3" x2="552.5" y2="82.4" stroke="#e8803c" stroke-width="1"/><rect x="551.4" y="74.6" width="2.2" height="2.1" fill="none" stroke="#f08440" stroke-width="1"/><line x1="556.5" y1="73.0" x2="556.5" y2="81.1" stroke="#e8803c" stroke-width="1"/><rect x="555.4" y="74.6" width="2.2" height="2.1" fill="#f8a868" stroke="#f08440" stroke-width="1"/><line x1="560.5" y1="67.7" x2="560.5" y2="77.3" stroke="#e8803c" stroke-width="1"/><rect x="559.4" y="70.2" width="2.2" height="4.4" fill="#f8a868" stroke="#f08440" stroke-width="1"/><line x1="564.5" y1="64.6" x2="564.5" y2="79.6" stroke="#e8803c" stroke-width="1"/><rect x="563.4" y="70.2" width="2.2" height="5.4" fill="none" stroke="#f08440" stroke-width="1"/><line x1="568.5" y1="64.8" x2="568.5" y2="81.2" stroke="#e8803c" stroke-width="1"/><rect x="567.4" y="69.2" width="2.2" height="6.4" fill="#f8a868" stroke="#f08440" stroke-width="1"/><line x1="572.5" y1="62.7" x2="572.5" y2="84.7" stroke="#e8803c" stroke-width="1"/><rect x="571.4" y="69.2" width="2.2" height="11.8" fill="none" stroke="#f08440" stroke-width="1"/><line x1="576.5" y1="69.9" x2="576.5" y2="85.0" stroke="#e8803c" stroke-width="1"/><rect x="575.4" y="74.6" width="2.2" height="6.4" fill="#f8a868" stroke="#f08440" stroke-width="1"/><line x1="580.5" y1="70.5" x2="580.5" y2="100.2" stroke="#e8803c" stroke-width="1"/><rect x="579.4" y="74.6" width="2.2" height="20.4" fill="none" stroke="#f08440" stroke-width="1"/><line x1="584.5" y1="89.3" x2="584.5" y2="99.2" stroke="#e8803c" stroke-width="1"/><rect x="583.4" y="93.0" width="2.2" height="2.0" fill="#f8a868" stroke="#f08440" stroke-width="1"/><line x1="588.5" y1="87.9" x2="588.5" y2="99.6" stroke="#e8803c" stroke-width="1"/><rect x="587.4" y="91.8" width="2.2" height="1.5" fill="#f8a868" stroke="#f08440" stroke-width="1"/><line x1="592.5" y1="77.8" x2="592.5" y2="98.1" stroke="#e8803c" stroke-width="1"/><rect x="591.4" y="83.0" width="2.2" height="8.8" fill="#f8a868" stroke="#f08440" stroke-width="1"/><line x1="596.5" y1="76.3" x2="596.5" y2="92.3" stroke="#e8803c" stroke-width="1"/><rect x="595.4" y="83.0" width="2.2" height="6.7" fill="none" stroke="#f08440" stroke-width="1"/><line x1="600.5" y1="73.4" x2="600.5" y2="96.4" stroke="#e8803c" stroke-width="1"/><rect x="599.4" y="77.8" width="2.2" height="11.9" fill="#f8a868" stroke="#f08440" stroke-width="1"/><line x1="604.5" y1="66.4" x2="604.5" y2="79.6" stroke="#e8803c" stroke-width="1"/><rect x="603.4" y="72.4" width="2.2" height="5.4" fill="#f8a868" stroke="#f08440" stroke-width="1"/><line x1="608.5" y1="67.5" x2="608.5" y2="76.1" stroke="#e8803c" stroke-width="1"/><rect x="607.4" y="69.2" width="2.2" height="3.2" fill="#f8a868" stroke="#f08440" stroke-width="1"/><line x1="613.5" y1="66.6" x2="613.5" y2="71.6" stroke="#e8803c" stroke-width="1"/><rect x="612.4" y="68.0" width="2.2" height="1.5" fill="#f8a868" stroke="#f08440" stroke-width="1"/><line x1="617.5" y1="66.6" x2="617.5" y2="78.5" stroke="#e8803c" stroke-width="1"/><rect x="616.4" y="68.0" width="2.2" height="5.5" fill="none" stroke="#f08440" stroke-width="1"/><line x1="621.5" y1="67.8" x2="621.5" y2="88.4" stroke="#e8803c" stroke-width="1"/><rect x="620.4" y="73.5" width="2.2" height="8.5" fill="none" stroke="#f08440" stroke-width="1"/><line x1="625.5" y1="80.1" x2="625.5" y2="106.9" stroke="#e8803c" stroke-width="1"/><rect x="624.4" y="82.0" width="2.2" height="19.6" fill="none" stroke="#f08440" stroke-width="1"/><line x1="629.5" y1="85.8" x2="629.5" y2="103.5" stroke="#e8803c" stroke-width="1"/><rect x="628.4" y="90.8" width="2.2" height="10.8" fill="#f8a868" stroke="#f08440" stroke-width="1"/><line x1="633.5" y1="84.5" x2="633.5" y2="99.8" stroke="#e8803c" stroke-width="1"/><rect x="632.4" y="90.8" width="2.2" height="2.2" fill="none" stroke="#f08440" stroke-width="1"/><line x1="637.5" y1="90.7" x2="637.5" y2="99.7" stroke="#e8803c" stroke-width="1"/><rect x="636.4" y="93.0" width="2.2" height="1.5" fill="#f8a868" stroke="#f08440" stroke-width="1"/><line x1="641.5" y1="84.1" x2="641.5" y2="96.9" stroke="#e8803c" stroke-width="1"/><rect x="640.4" y="87.5" width="2.2" height="5.5" fill="#f8a868" stroke="#f08440" stroke-width="1"/><line x1="645.5" y1="73.1" x2="645.5" y2="93.5" stroke="#e8803c" stroke-width="1"/><rect x="644.4" y="80.0" width="2.2" height="7.5" fill="#f8a868" stroke="#f08440" stroke-width="1"/><line x1="649.5" y1="76.9" x2="649.5" y2="83.6" stroke="#e8803c" stroke-width="1"/><rect x="648.4" y="78.9" width="2.2" height="1.5" fill="#f8a868" stroke="#f08440" stroke-width="1"/><line x1="653.5" y1="73.7" x2="653.5" y2="81.9" stroke="#e8803c" stroke-width="1"/><rect x="652.4" y="77.8" width="2.2" height="1.5" fill="#f8a868" stroke="#f08440" stroke-width="1"/><line x1="657.5" y1="72.4" x2="657.5" y2="80.7" stroke="#e8803c" stroke-width="1"/><rect x="656.4" y="74.6" width="2.2" height="3.2" fill="#f8a868" stroke="#f08440" stroke-width="1"/><line x1="661.5" y1="66.0" x2="661.5" y2="75.7" stroke="#e8803c" stroke-width="1"/><rect x="660.4" y="71.3" width="2.2" height="3.3" fill="#f8a868" stroke="#f08440" stroke-width="1"/><line x1="665.5" y1="53.0" x2="665.5" y2="74.9" stroke="#e8803c" stroke-width="1"/><rect x="664.4" y="57.3" width="2.2" height="14.0" fill="#f8a868" stroke="#f08440" stroke-width="1"/><line x1="669.5" y1="56.2" x2="669.5" y2="61.4" stroke="#e8803c" stroke-width="1"/><rect x="668.4" y="57.3" width="2.2" height="1.5" fill="none" stroke="#f08440" stroke-width="1"/><line x1="673.5" y1="53.7" x2="673.5" y2="68.9" stroke="#e8803c" stroke-width="1"/><rect x="672.4" y="58.4" width="2.2" height="6.4" fill="none" stroke="#f08440" stroke-width="1"/><line x1="678.5" y1="60.2" x2="678.5" y2="71.7" stroke="#e8803c" stroke-width="1"/><rect x="677.4" y="61.6" width="2.2" height="3.2" fill="#f8a868" stroke="#f08440" stroke-width="1"/><line x1="682.5" y1="53.7" x2="682.5" y2="68.4" stroke="#e8803c" stroke-width="1"/><rect x="681.4" y="59.4" width="2.2" height="2.2" fill="#f8a868" stroke="#f08440" stroke-width="1"/><line x1="686.5" y1="56.8" x2="686.5" y2="62.0" stroke="#e8803c" stroke-width="1"/><rect x="685.4" y="58.4" width="2.2" height="1.5" fill="#f8a868" stroke="#f08440" stroke-width="1"/><line x1="690.5" y1="57.2" x2="690.5" y2="70.5" stroke="#e8803c" stroke-width="1"/><rect x="689.4" y="58.4" width="2.2" height="6.4" fill="none" stroke="#f08440" stroke-width="1"/><line x1="694.5" y1="62.2" x2="694.5" y2="76.4" stroke="#e8803c" stroke-width="1"/><rect x="693.4" y="64.8" width="2.2" height="9.8" fill="none" stroke="#f08440" stroke-width="1"/><line x1="698.5" y1="71.1" x2="698.5" y2="91.9" stroke="#e8803c" stroke-width="1"/><rect x="697.4" y="74.6" width="2.2" height="10.8" fill="none" stroke="#f08440" stroke-width="1"/><line x1="702.5" y1="79.5" x2="702.5" y2="91.2" stroke="#e8803c" stroke-width="1"/><rect x="701.4" y="85.4" width="2.2" height="3.2" fill="none" stroke="#f08440" stroke-width="1"/><line x1="706.5" y1="86.7" x2="706.5" y2="95.1" stroke="#e8803c" stroke-width="1"/><rect x="705.4" y="88.6" width="2.2" height="1.5" fill="#f8a868" stroke="#f08440" stroke-width="1"/><line x1="710.5" y1="84.2" x2="710.5" y2="93.8" stroke="#e8803c" stroke-width="1"/><rect x="709.4" y="88.6" width="2.2" height="1.5" fill="#f8a868" stroke="#f08440" stroke-width="1"/><line x1="714.5" y1="87.1" x2="714.5" y2="94.3" stroke="#e8803c" stroke-width="1"/><rect x="713.4" y="88.6" width="2.2" height="4.4" fill="none" stroke="#f08440" stroke-width="1"/><line x1="718.5" y1="85.7" x2="718.5" y2="96.6" stroke="#e8803c" stroke-width="1"/><rect x="717.4" y="90.8" width="2.2" height="2.2" fill="#f8a868" stroke="#f08440" stroke-width="1"/><line x1="722.5" y1="89.4" x2="722.5" y2="97.4" stroke="#e8803c" stroke-width="1"/><rect x="721.4" y="90.8" width="2.2" height="1.5" fill="#f8a868" stroke="#f08440" stroke-width="1"/><line x1="726.5" y1="83.8" x2="726.5" y2="96.6" stroke="#e8803c" stroke-width="1"/><rect x="725.4" y="88.6" width="2.2" height="2.2" fill="#f8a868" stroke="#f08440" stroke-width="1"/><line x1="730.5" y1="87.1" x2="730.5" y2="97.9" stroke="#e8803c" stroke-width="1"/><rect x="729.4" y="88.6" width="2.2" height="3.2" fill="none" stroke="#f08440" stroke-width="1"/><line x1="734.5" y1="87.2" x2="734.5" y2="98.0" stroke="#e8803c" stroke-width="1"/><rect x="733.4" y="88.6" width="2.2" height="3.2" fill="#f8a868" stroke="#f08440" stroke-width="1"/><line x1="739.5" y1="82.7" x2="739.5" y2="91.6" stroke="#e8803c" stroke-width="1"/><rect x="738.4" y="86.4" width="2.2" height="2.2" fill="#f8a868" stroke="#f08440" stroke-width="1"/><line x1="743.5" y1="82.1" x2="743.5" y2="122.2" stroke="#e8803c" stroke-width="1"/><rect x="742.4" y="86.4" width="2.2" height="29.2" fill="none" stroke="#f08440" stroke-width="1"/><line x1="747.5" y1="83.8" x2="747.5" y2="117.4" stroke="#e8803c" stroke-width="1"/><rect x="746.4" y="86.4" width="2.2" height="29.2" fill="#f8a868" stroke="#f08440" stroke-width="1"/><line x1="751.5" y1="82.2" x2="751.5" y2="88.8" stroke="#e8803c" stroke-width="1"/><rect x="750.4" y="86.4" width="2.2" height="1.5" fill="#f8a868" stroke="#f08440" stroke-width="1"/><line x1="755.5" y1="84.7" x2="755.5" y2="90.6" stroke="#e8803c" stroke-width="1"/><rect x="754.4" y="86.4" width="2.2" height="2.2" fill="none" stroke="#f08440" stroke-width="1"/><line x1="759.5" y1="85.1" x2="759.5" y2="90.8" stroke="#e8803c" stroke-width="1"/><rect x="758.4" y="86.4" width="2.2" height="2.2" fill="#f8a868" stroke="#f08440" stroke-width="1"/><line x1="763.5" y1="83.5" x2="763.5" y2="91.4" stroke="#e8803c" stroke-width="1"/><rect x="762.4" y="86.4" width="2.2" height="2.2" fill="none" stroke="#f08440" stroke-width="1"/><line x1="767.5" y1="79.8" x2="767.5" y2="91.3" stroke="#e8803c" stroke-width="1"/><rect x="766.4" y="85.4" width="2.2" height="3.2" fill="#f8a868" stroke="#f08440" stroke-width="1"/><line x1="771.5" y1="68.4" x2="771.5" y2="87.5" stroke="#e8803c" stroke-width="1"/><rect x="770.4" y="72.4" width="2.2" height="13.0" fill="#f8a868" stroke="#f08440" stroke-width="1"/><line x1="775.5" y1="68.2" x2="775.5" y2="73.5" stroke="#e8803c" stroke-width="1"/><rect x="774.4" y="71.3" width="2.2" height="1.5" fill="#f8a868" stroke="#f08440" stroke-width="1"/><line x1="779.5" y1="67.7" x2="779.5" y2="72.4" stroke="#e8803c" stroke-width="1"/><rect x="778.4" y="70.2" width="2.2" height="1.5" fill="#f8a868" stroke="#f08440" stroke-width="1"/><line x1="783.5" y1="64.8" x2="783.5" y2="79.0" stroke="#e8803c" stroke-width="1"/><rect x="782.4" y="70.2" width="2.2" height="4.5" fill="none" stroke="#f08440" stroke-width="1"/><line x1="787.5" y1="69.9" x2="787.5" y2="78.5" stroke="#e8803c" stroke-width="1"/><rect x="786.4" y="72.0" width="2.2" height="2.7" fill="#f8a868" stroke="#f08440" stroke-width="1"/><line x1="791.5" y1="63.4" x2="791.5" y2="73.6" stroke="#e8803c" stroke-width="1"/><rect x="790.4" y="70.0" width="2.2" height="2.0" fill="#f8a868" stroke="#f08440" stroke-width="1"/><line x1="795.5" y1="63.1" x2="795.5" y2="73.6" stroke="#e8803c" stroke-width="1"/><rect x="794.4" y="69.0" width="2.2" height="1.5" fill="#f8a868" stroke="#f08440" stroke-width="1"/><line x1="800.5" y1="65.0" x2="800.5" y2="83.8" stroke="#e8803c" stroke-width="1"/><rect x="799.4" y="69.0" width="2.2" height="8.8" fill="none" stroke="#f08440" stroke-width="1"/><line x1="804.5" y1="66.6" x2="804.5" y2="81.8" stroke="#e8803c" stroke-width="1"/><rect x="803.4" y="70.0" width="2.2" height="7.8" fill="#f8a868" stroke="#f08440" stroke-width="1"/><line x1="808.5" y1="64.9" x2="808.5" y2="83.2" stroke="#e8803c" stroke-width="1"/><rect x="807.4" y="70.0" width="2.2" height="6.3" fill="none" stroke="#f08440" stroke-width="1"/><line x1="812.5" y1="73.2" x2="812.5" y2="100.0" stroke="#e8803c" stroke-width="1"/><rect x="811.4" y="76.3" width="2.2" height="17.7" fill="none" stroke="#f08440" stroke-width="1"/><line x1="816.5" y1="85.8" x2="816.5" y2="98.8" stroke="#e8803c" stroke-width="1"/><rect x="815.4" y="91.0" width="2.2" height="3.0" fill="#f8a868" stroke="#f08440" stroke-width="1"/><line x1="820.5" y1="77.6" x2="820.5" y2="94.1" stroke="#e8803c" stroke-width="1"/><rect x="819.4" y="81.0" width="2.2" height="10.0" fill="#f8a868" stroke="#f08440" stroke-width="1"/><line x1="824.5" y1="76.5" x2="824.5" y2="82.8" stroke="#e8803c" stroke-width="1"/><rect x="823.4" y="77.8" width="2.2" height="3.2" fill="#f8a868" stroke="#f08440" stroke-width="1"/><line x1="828.5" y1="76.4" x2="828.5" y2="86.4" stroke="#e8803c" stroke-width="1"/><rect x="827.4" y="77.8" width="2.2" height="3.2" fill="none" stroke="#f08440" stroke-width="1"/><line x1="832.5" y1="75.3" x2="832.5" y2="83.0" stroke="#e8803c" stroke-width="1"/><rect x="831.4" y="77.8" width="2.2" height="3.2" fill="#f8a868" stroke="#f08440" stroke-width="1"/><line x1="836.5" y1="76.3" x2="836.5" y2="96.2" stroke="#e8803c" stroke-width="1"/><rect x="835.4" y="77.8" width="2.2" height="12.4" fill="none" stroke="#f08440" stroke-width="1"/><line x1="840.5" y1="84.0" x2="840.5" y2="106.7" stroke="#e8803c" stroke-width="1"/><rect x="839.4" y="90.2" width="2.2" height="11.5" fill="none" stroke="#f08440" stroke-width="1"/><line x1="844.5" y1="99.0" x2="844.5" y2="125.1" stroke="#e8803c" stroke-width="1"/><rect x="843.4" y="101.7" width="2.2" height="20.9" fill="none" stroke="#f08440" stroke-width="1"/><line x1="848.5" y1="117.4" x2="848.5" y2="126.4" stroke="#e8803c" stroke-width="1"/><rect x="847.4" y="120.2" width="2.2" height="2.4" fill="#f8a868" stroke="#f08440" stroke-width="1"/><line x1="852.5" y1="115.3" x2="852.5" y2="123.9" stroke="#e8803c" stroke-width="1"/><rect x="851.4" y="117.2" width="2.2" height="3.0" fill="#f8a868" stroke="#f08440" stroke-width="1"/><line x1="856.5" y1="114.6" x2="856.5" y2="127.8" stroke="#e8803c" stroke-width="1"/><rect x="855.4" y="117.2" width="2.2" height="3.8" fill="none" stroke="#f08440" stroke-width="1"/><line x1="860.5" y1="114.2" x2="860.5" y2="128.4" stroke="#e8803c" stroke-width="1"/><rect x="859.4" y="121.0" width="2.2" height="3.1" fill="none" stroke="#f08440" stroke-width="1"/><line x1="865.5" y1="96.9" x2="865.5" y2="130.9" stroke="#e8803c" stroke-width="1"/><rect x="864.4" y="99.4" width="2.2" height="24.7" fill="#f8a868" stroke="#f08440" stroke-width="1"/><line x1="869.5" y1="95.1" x2="869.5" y2="102.5" stroke="#e8803c" stroke-width="1"/><rect x="868.4" y="98.0" width="2.2" height="1.5" fill="#f8a868" stroke="#f08440" stroke-width="1"/><line x1="873.5" y1="97.0" x2="873.5" y2="101.9" stroke="#e8803c" stroke-width="1"/><rect x="872.4" y="98.0" width="2.2" height="1.5" fill="none" stroke="#f08440" stroke-width="1"/><line x1="877.5" y1="94.1" x2="877.5" y2="102.6" stroke="#e8803c" stroke-width="1"/><rect x="876.4" y="97.9" width="2.2" height="1.5" fill="#f8a868" stroke="#f08440" stroke-width="1"/><line x1="881.5" y1="95.7" x2="881.5" y2="102.6" stroke="#e8803c" stroke-width="1"/><rect x="880.4" y="97.9" width="2.2" height="1.5" fill="none" stroke="#f08440" stroke-width="1"/></g>
</g>
<text x="18.6" y="52" font-family="Liberation Sans" font-size="10" fill="#e41c1c">Exponential_Moving_Average</text>
<text x="155.2" y="52" font-family="Liberation Sans" font-size="10" fill="#1c1cf0">Exponential_Moving_Average</text>
<rect x="15" y="40" width="31" height="22" fill="#eeeeee"/>
<rect x="15" y="40" width="31" height="4" fill="#d2d2d2"/>
<linearGradient id="gr" x1="0" y1="0" x2="0" y2="1"><stop offset="0" stop-color="#f06a6a"/><stop offset="1" stop-color="#c81c22"/></linearGradient>
<linearGradient id="gb" x1="0" y1="0" x2="0" y2="1"><stop offset="0" stop-color="#4ab4f0"/><stop offset="1" stop-color="#1478c8"/></linearGradient>
<rect x="19.5" y="48" width="9" height="10" rx="1.5" fill="url(#gr)" stroke="#901418" stroke-width="0.9"/>
<rect x="32.5" y="48" width="9" height="10" rx="1.5" fill="url(#gb)" stroke="#105898" stroke-width="0.9"/>
<g clip-path="url(#cmacd)">
<line x1="23.5" y1="257.0" x2="23.5" y2="324.5" stroke="#6a7682" stroke-width="1" stroke-dasharray="3,3"/>
<line x1="47.5" y1="257.0" x2="47.5" y2="324.5" stroke="#6a7682" stroke-width="1" stroke-dasharray="3,3"/>
<line x1="72.5" y1="257.0" x2="72.5" y2="324.5" stroke="#6a7682" stroke-width="1" stroke-dasharray="3,3"/>
<line x1="96.5" y1="257.0" x2="96.5" y2="324.5" stroke="#6a7682" stroke-width="1" stroke-dasharray="3,3"/>
<line x1="121.5" y1="257.0" x2="121.5" y2="324.5" stroke="#6a7682" stroke-width="1" stroke-dasharray="3,3"/>
<line x1="145.5" y1="257.0" x2="145.5" y2="324.5" stroke="#6a7682" stroke-width="1" stroke-dasharray="3,3"/>
<line x1="169.5" y1="257.0" x2="169.5" y2="324.5" stroke="#6a7682" stroke-width="1" stroke-dasharray="3,3"/>
<line x1="194.5" y1="257.0" x2="194.5" y2="324.5" stroke="#6a7682" stroke-width="1" stroke-dasharray="3,3"/>
<line x1="218.5" y1="257.0" x2="218.5" y2="324.5" stroke="#6a7682" stroke-width="1" stroke-dasharray="3,3"/>
<line x1="243.5" y1="257.0" x2="243.5" y2="324.5" stroke="#6a7682" stroke-width="1" stroke-dasharray="3,3"/>
<line x1="267.5" y1="257.5" x2="267.5" y2="324.5" stroke="#8c9aa8" stroke-width="1"/>
<line x1="291.5" y1="257.0" x2="291.5" y2="324.5" stroke="#6a7682" stroke-width="1" stroke-dasharray="3,3"/>
<line x1="316.5" y1="257.0" x2="316.5" y2="324.5" stroke="#6a7682" stroke-width="1" stroke-dasharray="3,3"/>
<line x1="340.5" y1="257.0" x2="340.5" y2="324.5" stroke="#6a7682" stroke-width="1" stroke-dasharray="3,3"/>
<line x1="365.5" y1="257.0" x2="365.5" y2="324.5" stroke="#6a7682" stroke-width="1" stroke-dasharray="3,3"/>
<line x1="389.5" y1="257.0" x2="389.5" y2="324.5" stroke="#6a7682" stroke-width="1" stroke-dasharray="3,3"/>
<line x1="413.5" y1="257.0" x2="413.5" y2="324.5" stroke="#6a7682" stroke-width="1" stroke-dasharray="3,3"/>
<line x1="438.5" y1="257.0" x2="438.5" y2="324.5" stroke="#6a7682" stroke-width="1" stroke-dasharray="3,3"/>
<line x1="462.5" y1="257.0" x2="462.5" y2="324.5" stroke="#6a7682" stroke-width="1" stroke-dasharray="3,3"/>
<line x1="487.5" y1="257.0" x2="487.5" y2="324.5" stroke="#6a7682" stroke-width="1" stroke-dasharray="3,3"/>
<line x1="511.5" y1="257.0" x2="511.5" y2="324.5" stroke="#6a7682" stroke-width="1" stroke-dasharray="3,3"/>
<line x1="535.5" y1="257.0" x2="535.5" y2="324.5" stroke="#6a7682" stroke-width="1" stroke-dasharray="3,3"/>
<line x1="560.5" y1="257.0" x2="560.5" y2="324.5" stroke="#6a7682" stroke-width="1" stroke-dasharray="3,3"/>
<line x1="584.5" y1="257.0" x2="584.5" y2="324.5" stroke="#6a7682" stroke-width="1" stroke-dasharray="3,3"/>
<line x1="608.5" y1="257.0" x2="608.5" y2="324.5" stroke="#6a7682" stroke-width="1" stroke-dasharray="3,3"/>
<line x1="633.5" y1="257.0" x2="633.5" y2="324.5" stroke="#6a7682" stroke-width="1" stroke-dasharray="3,3"/>
<line x1="657.5" y1="257.0" x2="657.5" y2="324.5" stroke="#6a7682" stroke-width="1" stroke-dasharray="3,3"/>
<line x1="682.5" y1="257.0" x2="682.5" y2="324.5" stroke="#6a7682" stroke-width="1" stroke-dasharray="3,3"/>
<line x1="706.5" y1="257.0" x2="706.5" y2="324.5" stroke="#6a7682" stroke-width="1" stroke-dasharray="3,3"/>
<line x1="730.5" y1="257.0" x2="730.5" y2="324.5" stroke="#6a7682" stroke-width="1" stroke-dasharray="3,3"/>
<line x1="755.5" y1="257.0" x2="755.5" y2="324.5" stroke="#6a7682" stroke-width="1" stroke-dasharray="3,3"/>
<line x1="779.5" y1="257.5" x2="779.5" y2="324.5" stroke="#8c9aa8" stroke-width="1"/>
<line x1="804.5" y1="257.0" x2="804.5" y2="324.5" stroke="#6a7682" stroke-width="1" stroke-dasharray="3,3"/>
<line x1="828.5" y1="257.0" x2="828.5" y2="324.5" stroke="#6a7682" stroke-width="1" stroke-dasharray="3,3"/>
<line x1="852.5" y1="257.0" x2="852.5" y2="324.5" stroke="#6a7682" stroke-width="1" stroke-dasharray="3,3"/>
<line x1="877.5" y1="257.0" x2="877.5" y2="324.5" stroke="#6a7682" stroke-width="1" stroke-dasharray="3,3"/>
<line x1="15.0" y1="296.5" x2="891.5" y2="296.5" stroke="#6a7682" stroke-width="1" stroke-dasharray="3,3"/>
<line x1="15.5" y1="296.3" x2="15.5" y2="300.2" stroke="#cc2626" stroke-width="1.2"/>
<line x1="20.5" y1="296.3" x2="20.5" y2="300.7" stroke="#cc2626" stroke-width="1.2"/>
<line x1="24.5" y1="296.3" x2="24.5" y2="301.1" stroke="#cc2626" stroke-width="1.2"/>
<line x1="28.5" y1="296.3" x2="28.5" y2="301.0" stroke="#cc2626" stroke-width="1.2"/>
<line x1="32.5" y1="296.3" x2="32.5" y2="297.4" stroke="#cc2626" stroke-width="1.2"/>
<line x1="36.5" y1="296.3" x2="36.5" y2="294.5" stroke="#cc2626" stroke-width="1.2"/>
<line x1="40.5" y1="296.3" x2="40.5" y2="293.4" stroke="#cc2626" stroke-width="1.2"/>
<line x1="44.5" y1="296.3" x2="44.5" y2="292.8" stroke="#cc2626" stroke-width="1.2"/>
<line x1="48.5" y1="296.3" x2="48.5" y2="292.8" stroke="#cc2626" stroke-width="1.2"/>
<line x1="52.5" y1="296.3" x2="52.5" y2="291.9" stroke="#cc2626" stroke-width="1.2"/>
<line x1="56.5" y1="296.3" x2="56.5" y2="291.0" stroke="#cc2626" stroke-width="1.2"/>
<line x1="60.5" y1="296.3" x2="60.5" y2="292.9" stroke="#cc2626" stroke-width="1.2"/>
<line x1="64.5" y1="296.3" x2="64.5" y2="294.3" stroke="#cc2626" stroke-width="1.2"/>
<line x1="68.5" y1="296.3" x2="68.5" y2="295.3" stroke="#cc2626" stroke-width="1.2"/>
<line x1="76.5" y1="296.3" x2="76.5" y2="297.4" stroke="#cc2626" stroke-width="1.2"/>
<line x1="81.5" y1="296.3" x2="81.5" y2="299.0" stroke="#cc2626" stroke-width="1.2"/>
<line x1="85.5" y1="296.3" x2="85.5" y2="300.7" stroke="#cc2626" stroke-width="1.2"/>
<line x1="89.5" y1="296.3" x2="89.5" y2="301.0" stroke="#cc2626" stroke-width="1.2"/>
<line x1="93.5" y1="296.3" x2="93.5" y2="300.5" stroke="#cc2626" stroke-width="1.2"/>
<line x1="97.5" y1="296.3" x2="97.5" y2="300.3" stroke="#cc2626" stroke-width="1.2"/>
<line x1="101.5" y1="296.3" x2="101.5" y2="300.2" stroke="#cc2626" stroke-width="1.2"/>
<line x1="105.5" y1="296.3" x2="105.5" y2="300.2" stroke="#cc2626" stroke-width="1.2"/>
<line x1="109.5" y1="296.3" x2="109.5" y2="299.9" stroke="#cc2626" stroke-width="1.2"/>
<line x1="113.5" y1="296.3" x2="113.5" y2="300.4" stroke="#cc2626" stroke-width="1.2"/>
<line x1="117.5" y1="296.3" x2="117.5" y2="301.0" stroke="#cc2626" stroke-width="1.2"/>
<line x1="121.5" y1="296.3" x2="121.5" y2="301.5" stroke="#cc2626" stroke-width="1.2"/>
<line x1="125.5" y1="296.3" x2="125.5" y2="301.7" stroke="#cc2626" stroke-width="1.2"/>
<line x1="129.5" y1="296.3" x2="129.5" y2="299.9" stroke="#cc2626" stroke-width="1.2"/>
<line x1="133.5" y1="296.3" x2="133.5" y2="298.1" stroke="#cc2626" stroke-width="1.2"/>
<line x1="142.5" y1="296.3" x2="142.5" y2="294.8" stroke="#cc2626" stroke-width="1.2"/>
<line x1="146.5" y1="296.3" x2="146.5" y2="293.5" stroke="#cc2626" stroke-width="1.2"/>
<line x1="150.5" y1="296.3" x2="150.5" y2="292.3" stroke="#cc2626" stroke-width="1.2"/>
<line x1="154.5" y1="296.3" x2="154.5" y2="292.8" stroke="#cc2626" stroke-width="1.2"/>
<line x1="158.5" y1="296.3" x2="158.5" y2="293.7" stroke="#cc2626" stroke-width="1.2"/>
<line x1="162.5" y1="296.3" x2="162.5" y2="294.5" stroke="#cc2626" stroke-width="1.2"/>
<line x1="170.5" y1="296.3" x2="170.5" y2="298.6" stroke="#cc2626" stroke-width="1.2"/>
<line x1="174.5" y1="296.3" x2="174.5" y2="299.8" stroke="#cc2626" stroke-width="1.2"/>
<line x1="178.5" y1="296.3" x2="178.5" y2="300.4" stroke="#cc2626" stroke-width="1.2"/>
<line x1="182.5" y1="296.3" x2="182.5" y2="300.3" stroke="#cc2626" stroke-width="1.2"/>
<line x1="186.5" y1="296.3" x2="186.5" y2="300.3" stroke="#cc2626" stroke-width="1.2"/>
<line x1="190.5" y1="296.3" x2="190.5" y2="300.2" stroke="#cc2626" stroke-width="1.2"/>
<line x1="194.5" y1="296.3" x2="194.5" y2="300.5" stroke="#cc2626" stroke-width="1.2"/>
<line x1="198.5" y1="296.3" x2="198.5" y2="301.0" stroke="#cc2626" stroke-width="1.2"/>
<line x1="203.5" y1="296.3" x2="203.5" y2="301.4" stroke="#cc2626" stroke-width="1.2"/>
<line x1="207.5" y1="296.3" x2="207.5" y2="301.9" stroke="#cc2626" stroke-width="1.2"/>
<line x1="211.5" y1="296.3" x2="211.5" y2="298.3" stroke="#cc2626" stroke-width="1.2"/>
<line x1="219.5" y1="296.3" x2="219.5" y2="294.1" stroke="#cc2626" stroke-width="1.2"/>
<line x1="223.5" y1="296.3" x2="223.5" y2="293.7" stroke="#cc2626" stroke-width="1.2"/>
<line x1="227.5" y1="296.3" x2="227.5" y2="294.1" stroke="#cc2626" stroke-width="1.2"/>
<line x1="231.5" y1="296.3" x2="231.5" y2="294.4" stroke="#cc2626" stroke-width="1.2"/>
<line x1="235.5" y1="296.3" x2="235.5" y2="295.2" stroke="#cc2626" stroke-width="1.2"/>
<line x1="251.5" y1="296.3" x2="251.5" y2="298.8" stroke="#cc2626" stroke-width="1.2"/>
<line x1="255.5" y1="296.3" x2="255.5" y2="301.7" stroke="#cc2626" stroke-width="1.2"/>
<line x1="260.5" y1="296.3" x2="260.5" y2="303.6" stroke="#cc2626" stroke-width="1.2"/>
<line x1="264.5" y1="296.3" x2="264.5" y2="307.8" stroke="#cc2626" stroke-width="1.2"/>
<line x1="268.5" y1="296.3" x2="268.5" y2="310.0" stroke="#cc2626" stroke-width="1.2"/>
<line x1="272.5" y1="296.3" x2="272.5" y2="310.2" stroke="#cc2626" stroke-width="1.2"/>
<line x1="276.5" y1="296.3" x2="276.5" y2="309.1" stroke="#cc2626" stroke-width="1.2"/>
<line x1="280.5" y1="296.3" x2="280.5" y2="308.1" stroke="#cc2626" stroke-width="1.2"/>
<line x1="284.5" y1="296.3" x2="284.5" y2="305.6" stroke="#cc2626" stroke-width="1.2"/>
<line x1="288.5" y1="296.3" x2="288.5" y2="302.8" stroke="#cc2626" stroke-width="1.2"/>
<line x1="292.5" y1="296.3" x2="292.5" y2="301.5" stroke="#cc2626" stroke-width="1.2"/>
<line x1="296.5" y1="296.3" x2="296.5" y2="302.0" stroke="#cc2626" stroke-width="1.2"/>
<line x1="300.5" y1="296.3" x2="300.5" y2="302.6" stroke="#cc2626" stroke-width="1.2"/>
<line x1="304.5" y1="296.3" x2="304.5" y2="302.1" stroke="#cc2626" stroke-width="1.2"/>
<line x1="308.5" y1="296.3" x2="308.5" y2="301.7" stroke="#cc2626" stroke-width="1.2"/>
<line x1="312.5" y1="296.3" x2="312.5" y2="301.2" stroke="#cc2626" stroke-width="1.2"/>
<line x1="316.5" y1="296.3" x2="316.5" y2="300.8" stroke="#cc2626" stroke-width="1.2"/>
<line x1="321.5" y1="296.3" x2="321.5" y2="300.5" stroke="#cc2626" stroke-width="1.2"/>
<line x1="325.5" y1="296.3" x2="325.5" y2="300.4" stroke="#cc2626" stroke-width="1.2"/>
<line x1="329.5" y1="296.3" x2="329.5" y2="300.4" stroke="#cc2626" stroke-width="1.2"/>
<line x1="333.5" y1="296.3" x2="333.5" y2="300.4" stroke="#cc2626" stroke-width="1.2"/>
<line x1="337.5" y1="296.3" x2="337.5" y2="298.8" stroke="#cc2626" stroke-width="1.2"/>
<line x1="341.5" y1="296.3" x2="341.5" y2="297.8" stroke="#cc2626" stroke-width="1.2"/>
<line x1="345.5" y1="296.3" x2="345.5" y2="297.3" stroke="#cc2626" stroke-width="1.2"/>
<line x1="349.5" y1="296.3" x2="349.5" y2="294.9" stroke="#cc2626" stroke-width="1.2"/>
<line x1="353.5" y1="296.3" x2="353.5" y2="293.3" stroke="#cc2626" stroke-width="1.2"/>
<line x1="357.5" y1="296.3" x2="357.5" y2="292.1" stroke="#cc2626" stroke-width="1.2"/>
<line x1="361.5" y1="296.3" x2="361.5" y2="291.0" stroke="#cc2626" stroke-width="1.2"/>
<line x1="365.5" y1="296.3" x2="365.5" y2="289.6" stroke="#cc2626" stroke-width="1.2"/>
<line x1="369.5" y1="296.3" x2="369.5" y2="288.4" stroke="#cc2626" stroke-width="1.2"/>
<line x1="373.5" y1="296.3" x2="373.5" y2="287.3" stroke="#cc2626" stroke-width="1.2"/>
<line x1="377.5" y1="296.3" x2="377.5" y2="284.0" stroke="#cc2626" stroke-width="1.2"/>
<line x1="382.5" y1="296.3" x2="382.5" y2="279.6" stroke="#cc2626" stroke-width="1.2"/>
<line x1="386.5" y1="296.3" x2="386.5" y2="277.2" stroke="#cc2626" stroke-width="1.2"/>
<line x1="390.5" y1="296.3" x2="390.5" y2="277.6" stroke="#cc2626" stroke-width="1.2"/>
<line x1="394.5" y1="296.3" x2="394.5" y2="279.6" stroke="#cc2626" stroke-width="1.2"/>
<line x1="398.5" y1="296.3" x2="398.5" y2="282.1" stroke="#cc2626" stroke-width="1.2"/>
<line x1="402.5" y1="296.3" x2="402.5" y2="282.7" stroke="#cc2626" stroke-width="1.2"/>
<line x1="406.5" y1="296.3" x2="406.5" y2="286.2" stroke="#cc2626" stroke-width="1.2"/>
<line x1="410.5" y1="296.3" x2="410.5" y2="288.9" stroke="#cc2626" stroke-width="1.2"/>
<line x1="414.5" y1="296.3" x2="414.5" y2="292.6" stroke="#cc2626" stroke-width="1.2"/>
<line x1="418.5" y1="296.3" x2="418.5" y2="295.3" stroke="#cc2626" stroke-width="1.2"/>
<line x1="434.5" y1="296.3" x2="434.5" y2="297.4" stroke="#cc2626" stroke-width="1.2"/>
<line x1="438.5" y1="296.3" x2="438.5" y2="298.2" stroke="#cc2626" stroke-width="1.2"/>
<line x1="443.5" y1="296.3" x2="443.5" y2="299.8" stroke="#cc2626" stroke-width="1.2"/>
<line x1="447.5" y1="296.3" x2="447.5" y2="301.8" stroke="#cc2626" stroke-width="1.2"/>
<line x1="451.5" y1="296.3" x2="451.5" y2="304.6" stroke="#cc2626" stroke-width="1.2"/>
<line x1="455.5" y1="296.3" x2="455.5" y2="308.8" stroke="#cc2626" stroke-width="1.2"/>
<line x1="459.5" y1="296.3" x2="459.5" y2="311.5" stroke="#cc2626" stroke-width="1.2"/>
<line x1="463.5" y1="296.3" x2="463.5" y2="311.9" stroke="#cc2626" stroke-width="1.2"/>
<line x1="467.5" y1="296.3" x2="467.5" y2="312.4" stroke="#cc2626" stroke-width="1.2"/>
<line x1="471.5" y1="296.3" x2="471.5" y2="311.6" stroke="#cc2626" stroke-width="1.2"/>
<line x1="475.5" y1="296.3" x2="475.5" y2="310.2" stroke="#cc2626" stroke-width="1.2"/>
<line x1="479.5" y1="296.3" x2="479.5" y2="308.9" stroke="#cc2626" stroke-width="1.2"/>
<line x1="483.5" y1="296.3" x2="483.5" y2="306.8" stroke="#cc2626" stroke-width="1.2"/>
<line x1="487.5" y1="296.3" x2="487.5" y2="304.6" stroke="#cc2626" stroke-width="1.2"/>
<line x1="491.5" y1="296.3" x2="491.5" y2="304.0" stroke="#cc2626" stroke-width="1.2"/>
<line x1="495.5" y1="296.3" x2="495.5" y2="300.0" stroke="#cc2626" stroke-width="1.2"/>
<line x1="504.5" y1="296.3" x2="504.5" y2="294.3" stroke="#cc2626" stroke-width="1.2"/>
<line x1="508.5" y1="296.3" x2="508.5" y2="292.6" stroke="#cc2626" stroke-width="1.2"/>
<line x1="512.5" y1="296.3" x2="512.5" y2="291.4" stroke="#cc2626" stroke-width="1.2"/>
<line x1="516.5" y1="296.3" x2="516.5" y2="291.2" stroke="#cc2626" stroke-width="1.2"/>
<line x1="520.5" y1="296.3" x2="520.5" y2="290.9" stroke="#cc2626" stroke-width="1.2"/>
<line x1="524.5" y1="296.3" x2="524.5" y2="290.7" stroke="#cc2626" stroke-width="1.2"/>
<line x1="528.5" y1="296.3" x2="528.5" y2="291.0" stroke="#cc2626" stroke-width="1.2"/>
<line x1="532.5" y1="296.3" x2="532.5" y2="291.6" stroke="#cc2626" stroke-width="1.2"/>
<line x1="536.5" y1="296.3" x2="536.5" y2="292.3" stroke="#cc2626" stroke-width="1.2"/>
<line x1="540.5" y1="296.3" x2="540.5" y2="291.6" stroke="#cc2626" stroke-width="1.2"/>
<line x1="544.5" y1="296.3" x2="544.5" y2="288.4" stroke="#cc2626" stroke-width="1.2"/>
<line x1="548.5" y1="296.3" x2="548.5" y2="286.4" stroke="#cc2626" stroke-width="1.2"/>
<line x1="552.5" y1="296.3" x2="552.5" y2="285.9" stroke="#cc2626" stroke-width="1.2"/>
<line x1="556.5" y1="296.3" x2="556.5" y2="285.5" stroke="#cc2626" stroke-width="1.2"/>
<line x1="560.5" y1="296.3" x2="560.5" y2="285.8" stroke="#cc2626" stroke-width="1.2"/>
<line x1="565.5" y1="296.3" x2="565.5" y2="288.4" stroke="#cc2626" stroke-width="1.2"/>
<line x1="569.5" y1="296.3" x2="569.5" y2="290.2" stroke="#cc2626" stroke-width="1.2"/>
<line x1="573.5" y1="296.3" x2="573.5" y2="292.7" stroke="#cc2626" stroke-width="1.2"/>
<line x1="581.5" y1="296.3" x2="581.5" y2="298.6" stroke="#cc2626" stroke-width="1.2"/>
<line x1="585.5" y1="296.3" x2="585.5" y2="300.8" stroke="#cc2626" stroke-width="1.2"/>
<line x1="589.5" y1="296.3" x2="589.5" y2="302.8" stroke="#cc2626" stroke-width="1.2"/>
<line x1="593.5" y1="296.3" x2="593.5" y2="303.8" stroke="#cc2626" stroke-width="1.2"/>
<line x1="597.5" y1="296.3" x2="597.5" y2="302.4" stroke="#cc2626" stroke-width="1.2"/>
<line x1="601.5" y1="296.3" x2="601.5" y2="301.7" stroke="#cc2626" stroke-width="1.2"/>
<line x1="605.5" y1="296.3" x2="605.5" y2="299.9" stroke="#cc2626" stroke-width="1.2"/>
<line x1="609.5" y1="296.3" x2="609.5" y2="297.9" stroke="#cc2626" stroke-width="1.2"/>
<line x1="626.5" y1="296.3" x2="626.5" y2="301.6" stroke="#cc2626" stroke-width="1.2"/>
<line x1="630.5" y1="296.3" x2="630.5" y2="302.6" stroke="#cc2626" stroke-width="1.2"/>
<line x1="634.5" y1="296.3" x2="634.5" y2="303.2" stroke="#cc2626" stroke-width="1.2"/>
<line x1="638.5" y1="296.3" x2="638.5" y2="303.9" stroke="#cc2626" stroke-width="1.2"/>
<line x1="642.5" y1="296.3" x2="642.5" y2="302.2" stroke="#cc2626" stroke-width="1.2"/>
<line x1="646.5" y1="296.3" x2="646.5" y2="300.9" stroke="#cc2626" stroke-width="1.2"/>
<line x1="650.5" y1="296.3" x2="650.5" y2="299.6" stroke="#cc2626" stroke-width="1.2"/>
<line x1="654.5" y1="296.3" x2="654.5" y2="298.2" stroke="#cc2626" stroke-width="1.2"/>
<line x1="666.5" y1="296.3" x2="666.5" y2="293.2" stroke="#cc2626" stroke-width="1.2"/>
<line x1="670.5" y1="296.3" x2="670.5" y2="291.7" stroke="#cc2626" stroke-width="1.2"/>
<line x1="674.5" y1="296.3" x2="674.5" y2="292.3" stroke="#cc2626" stroke-width="1.2"/>
<line x1="678.5" y1="296.3" x2="678.5" y2="292.9" stroke="#cc2626" stroke-width="1.2"/>
<line x1="683.5" y1="296.3" x2="683.5" y2="293.6" stroke="#cc2626" stroke-width="1.2"/>
<line x1="687.5" y1="296.3" x2="687.5" y2="294.2" stroke="#cc2626" stroke-width="1.2"/>
<line x1="695.5" y1="296.3" x2="695.5" y2="297.5" stroke="#cc2626" stroke-width="1.2"/>
<line x1="699.5" y1="296.3" x2="699.5" y2="299.3" stroke="#cc2626" stroke-width="1.2"/>
<line x1="703.5" y1="296.3" x2="703.5" y2="302.1" stroke="#cc2626" stroke-width="1.2"/>
<line x1="707.5" y1="296.3" x2="707.5" y2="304.1" stroke="#cc2626" stroke-width="1.2"/>
<line x1="711.5" y1="296.3" x2="711.5" y2="304.0" stroke="#cc2626" stroke-width="1.2"/>
<line x1="715.5" y1="296.3" x2="715.5" y2="303.9" stroke="#cc2626" stroke-width="1.2"/>
<line x1="719.5" y1="296.3" x2="719.5" y2="303.7" stroke="#cc2626" stroke-width="1.2"/>
<line x1="723.5" y1="296.3" x2="723.5" y2="303.4" stroke="#cc2626" stroke-width="1.2"/>
<line x1="727.5" y1="296.3" x2="727.5" y2="303.1" stroke="#cc2626" stroke-width="1.2"/>
<line x1="731.5" y1="296.3" x2="731.5" y2="303.0" stroke="#cc2626" stroke-width="1.2"/>
<line x1="735.5" y1="296.3" x2="735.5" y2="302.0" stroke="#cc2626" stroke-width="1.2"/>
<line x1="739.5" y1="296.3" x2="739.5" y2="302.8" stroke="#cc2626" stroke-width="1.2"/>
<line x1="744.5" y1="296.3" x2="744.5" y2="305.1" stroke="#cc2626" stroke-width="1.2"/>
<line x1="748.5" y1="296.3" x2="748.5" y2="302.7" stroke="#cc2626" stroke-width="1.2"/>
<line x1="752.5" y1="296.3" x2="752.5" y2="300.4" stroke="#cc2626" stroke-width="1.2"/>
<line x1="756.5" y1="296.3" x2="756.5" y2="298.6" stroke="#cc2626" stroke-width="1.2"/>
<line x1="760.5" y1="296.3" x2="760.5" y2="297.3" stroke="#cc2626" stroke-width="1.2"/>
<line x1="772.5" y1="296.3" x2="772.5" y2="293.9" stroke="#cc2626" stroke-width="1.2"/>
<line x1="776.5" y1="296.3" x2="776.5" y2="292.5" stroke="#cc2626" stroke-width="1.2"/>
<line x1="780.5" y1="296.3" x2="780.5" y2="292.6" stroke="#cc2626" stroke-width="1.2"/>
<line x1="784.5" y1="296.3" x2="784.5" y2="293.1" stroke="#cc2626" stroke-width="1.2"/>
<line x1="788.5" y1="296.3" x2="788.5" y2="292.8" stroke="#cc2626" stroke-width="1.2"/>
<line x1="792.5" y1="296.3" x2="792.5" y2="292.3" stroke="#cc2626" stroke-width="1.2"/>
<line x1="796.5" y1="296.3" x2="796.5" y2="293.0" stroke="#cc2626" stroke-width="1.2"/>
<line x1="800.5" y1="296.3" x2="800.5" y2="294.2" stroke="#cc2626" stroke-width="1.2"/>
<line x1="805.5" y1="296.3" x2="805.5" y2="295.5" stroke="#cc2626" stroke-width="1.2"/>
<line x1="809.5" y1="296.3" x2="809.5" y2="297.7" stroke="#cc2626" stroke-width="1.2"/>
<line x1="813.5" y1="296.3" x2="813.5" y2="299.3" stroke="#cc2626" stroke-width="1.2"/>
<line x1="817.5" y1="296.3" x2="817.5" y2="299.3" stroke="#cc2626" stroke-width="1.2"/>
<line x1="821.5" y1="296.3" x2="821.5" y2="298.7" stroke="#cc2626" stroke-width="1.2"/>
<line x1="825.5" y1="296.3" x2="825.5" y2="299.0" stroke="#cc2626" stroke-width="1.2"/>
<line x1="829.5" y1="296.3" x2="829.5" y2="299.3" stroke="#cc2626" stroke-width="1.2"/>
<line x1="833.5" y1="296.3" x2="833.5" y2="298.8" stroke="#cc2626" stroke-width="1.2"/>
<line x1="837.5" y1="296.3" x2="837.5" y2="299.5" stroke="#cc2626" stroke-width="1.2"/>
<line x1="841.5" y1="296.3" x2="841.5" y2="302.5" stroke="#cc2626" stroke-width="1.2"/>
<line x1="845.5" y1="296.3" x2="845.5" y2="306.2" stroke="#cc2626" stroke-width="1.2"/>
<line x1="849.5" y1="296.3" x2="849.5" y2="308.4" stroke="#cc2626" stroke-width="1.2"/>
<line x1="853.5" y1="296.3" x2="853.5" y2="309.1" stroke="#cc2626" stroke-width="1.2"/>
<line x1="857.5" y1="296.3" x2="857.5" y2="309.2" stroke="#cc2626" stroke-width="1.2"/>
<line x1="861.5" y1="296.3" x2="861.5" y2="307.7" stroke="#cc2626" stroke-width="1.2"/>
<line x1="866.5" y1="296.3" x2="866.5" y2="304.2" stroke="#cc2626" stroke-width="1.2"/>
<line x1="870.5" y1="296.3" x2="870.5" y2="300.8" stroke="#cc2626" stroke-width="1.2"/>
<line x1="874.5" y1="296.3" x2="874.5" y2="298.3" stroke="#cc2626" stroke-width="1.2"/>
<line x1="882.5" y1="296.3" x2="882.5" y2="294.0" stroke="#cc2626" stroke-width="1.2"/>
<polyline points="15.3,277.0 27.2,281.7 36.7,273.1 48.2,269.3 56.8,264.2 65.4,266.5 75.0,269.3 86.4,277.9 99.8,279.8 109.3,281.7 124.6,288.4 139.9,279.8 151.3,271.8 162.8,273.1 176.2,279.8 191.4,282.7 206.7,287.5 220.0,278.0 231.5,277.5 248.6,278.9 258.2,287.5 265.8,300.8 273.5,307.5 281.1,309.4 290.7,307.0 300.2,311.3 315.5,314.2 332.7,318.0 346.0,315.7 353.7,309.4 365.2,299.9 374.7,292.2 384.2,274.1 391.9,266.5 401.4,260.3 409.1,261.7 416.7,267.4 430.1,267.4 439.5,271.2 449.1,278.9 456.7,291.3 468.2,301.8 479.7,305.6 491.1,306.6 502.6,297.0 510.2,291.3 525.5,285.6 538.9,282.7 546.5,273.1 559.9,264.5 571.3,265.5 582.8,272.2 592.3,278.9 601.9,278.9 611.4,275.6 621.0,275.0 624.8,281.7 638.2,290.3 651.5,288.4 662.9,285.6 668.6,279.8 678.2,278.9 687.7,277.9 697.3,282.7 704.9,290.3 716.4,297.0 729.8,302.7 737.4,303.1 743.1,308.5 754.6,304.3 766.1,301.8 777.5,294.2 792.8,289.8 804.2,290.3 813.8,295.1 834.7,296.7 838.2,299.0 848.6,312.9 860.2,321.6 869.4,316.3 881.0,309.4" fill="none" stroke="#12128c" stroke-width="1.2"/>
<circle cx="15.5" cy="273.1" r="1.6" fill="#ea2a2a"/>
<circle cx="19.5" cy="274.3" r="1.6" fill="#ea2a2a"/>
<circle cx="23.6" cy="275.5" r="1.6" fill="#ea2a2a"/>
<circle cx="27.7" cy="276.6" r="1.6" fill="#ea2a2a"/>
<circle cx="31.7" cy="276.5" r="1.6" fill="#ea2a2a"/>
<circle cx="35.8" cy="275.7" r="1.6" fill="#ea2a2a"/>
<circle cx="39.9" cy="275.0" r="1.6" fill="#ea2a2a"/>
<circle cx="43.9" cy="274.2" r="1.6" fill="#ea2a2a"/>
<circle cx="48.0" cy="272.8" r="1.6" fill="#ea2a2a"/>
<circle cx="52.1" cy="271.4" r="1.6" fill="#ea2a2a"/>
<circle cx="56.1" cy="269.9" r="1.6" fill="#ea2a2a"/>
<circle cx="60.2" cy="268.5" r="1.6" fill="#ea2a2a"/>
<circle cx="64.3" cy="268.2" r="1.6" fill="#ea2a2a"/>
<circle cx="68.3" cy="268.4" r="1.6" fill="#ea2a2a"/>
<circle cx="72.4" cy="268.6" r="1.6" fill="#ea2a2a"/>
<circle cx="76.5" cy="269.3" r="1.6" fill="#ea2a2a"/>
<circle cx="80.5" cy="270.7" r="1.6" fill="#ea2a2a"/>
<circle cx="84.6" cy="272.1" r="1.6" fill="#ea2a2a"/>
<circle cx="88.7" cy="273.6" r="1.6" fill="#ea2a2a"/>
<circle cx="92.7" cy="274.6" r="1.6" fill="#ea2a2a"/>
<circle cx="96.8" cy="275.4" r="1.6" fill="#ea2a2a"/>
<circle cx="100.9" cy="276.1" r="1.6" fill="#ea2a2a"/>
<circle cx="104.9" cy="276.9" r="1.6" fill="#ea2a2a"/>
<circle cx="109.0" cy="278.0" r="1.6" fill="#ea2a2a"/>
<circle cx="113.1" cy="279.3" r="1.6" fill="#ea2a2a"/>
<circle cx="117.1" cy="280.5" r="1.6" fill="#ea2a2a"/>
<circle cx="121.2" cy="281.7" r="1.6" fill="#ea2a2a"/>
<circle cx="125.3" cy="282.6" r="1.6" fill="#ea2a2a"/>
<circle cx="129.3" cy="282.1" r="1.6" fill="#ea2a2a"/>
<circle cx="133.4" cy="281.6" r="1.6" fill="#ea2a2a"/>
<circle cx="137.5" cy="281.1" r="1.6" fill="#ea2a2a"/>
<circle cx="141.5" cy="280.2" r="1.6" fill="#ea2a2a"/>
<circle cx="145.6" cy="278.6" r="1.6" fill="#ea2a2a"/>
<circle cx="149.7" cy="277.0" r="1.6" fill="#ea2a2a"/>
<circle cx="153.8" cy="275.5" r="1.6" fill="#ea2a2a"/>
<circle cx="157.8" cy="275.1" r="1.6" fill="#ea2a2a"/>
<circle cx="161.9" cy="274.7" r="1.6" fill="#ea2a2a"/>
<circle cx="166.0" cy="274.3" r="1.6" fill="#ea2a2a"/>
<circle cx="170.0" cy="274.4" r="1.6" fill="#ea2a2a"/>
<circle cx="174.1" cy="275.2" r="1.6" fill="#ea2a2a"/>
<circle cx="178.2" cy="276.1" r="1.6" fill="#ea2a2a"/>
<circle cx="182.2" cy="276.9" r="1.6" fill="#ea2a2a"/>
<circle cx="186.3" cy="277.7" r="1.6" fill="#ea2a2a"/>
<circle cx="190.4" cy="278.6" r="1.6" fill="#ea2a2a"/>
<circle cx="194.4" cy="279.4" r="1.6" fill="#ea2a2a"/>
<circle cx="198.5" cy="280.2" r="1.6" fill="#ea2a2a"/>
<circle cx="202.6" cy="281.1" r="1.6" fill="#ea2a2a"/>
<circle cx="206.6" cy="281.9" r="1.6" fill="#ea2a2a"/>
<circle cx="210.7" cy="282.7" r="1.6" fill="#ea2a2a"/>
<circle cx="214.8" cy="281.8" r="1.6" fill="#ea2a2a"/>
<circle cx="218.8" cy="281.0" r="1.6" fill="#ea2a2a"/>
<circle cx="222.9" cy="280.4" r="1.6" fill="#ea2a2a"/>
<circle cx="227.0" cy="279.9" r="1.6" fill="#ea2a2a"/>
<circle cx="231.0" cy="279.4" r="1.6" fill="#ea2a2a"/>
<circle cx="235.1" cy="278.9" r="1.6" fill="#ea2a2a"/>
<circle cx="239.2" cy="278.9" r="1.6" fill="#ea2a2a"/>
<circle cx="243.2" cy="278.9" r="1.6" fill="#ea2a2a"/>
<circle cx="247.3" cy="278.9" r="1.6" fill="#ea2a2a"/>
<circle cx="251.4" cy="278.9" r="1.6" fill="#ea2a2a"/>
<circle cx="255.4" cy="279.6" r="1.6" fill="#ea2a2a"/>
<circle cx="259.5" cy="282.5" r="1.6" fill="#ea2a2a"/>
<circle cx="263.6" cy="285.4" r="1.6" fill="#ea2a2a"/>
<circle cx="267.6" cy="288.7" r="1.6" fill="#ea2a2a"/>
<circle cx="271.7" cy="292.0" r="1.6" fill="#ea2a2a"/>
<circle cx="275.8" cy="295.3" r="1.6" fill="#ea2a2a"/>
<circle cx="279.8" cy="297.3" r="1.6" fill="#ea2a2a"/>
<circle cx="283.9" cy="299.4" r="1.6" fill="#ea2a2a"/>
<circle cx="288.0" cy="301.2" r="1.6" fill="#ea2a2a"/>
<circle cx="292.0" cy="302.4" r="1.6" fill="#ea2a2a"/>
<circle cx="296.1" cy="303.7" r="1.6" fill="#ea2a2a"/>
<circle cx="300.2" cy="305.0" r="1.6" fill="#ea2a2a"/>
<circle cx="304.2" cy="306.2" r="1.6" fill="#ea2a2a"/>
<circle cx="308.3" cy="307.5" r="1.6" fill="#ea2a2a"/>
<circle cx="312.4" cy="308.7" r="1.6" fill="#ea2a2a"/>
<circle cx="316.4" cy="309.9" r="1.6" fill="#ea2a2a"/>
<circle cx="320.5" cy="311.1" r="1.6" fill="#ea2a2a"/>
<circle cx="324.6" cy="312.1" r="1.6" fill="#ea2a2a"/>
<circle cx="328.7" cy="313.0" r="1.6" fill="#ea2a2a"/>
<circle cx="332.7" cy="313.9" r="1.6" fill="#ea2a2a"/>
<circle cx="336.8" cy="314.8" r="1.6" fill="#ea2a2a"/>
<circle cx="340.9" cy="315.1" r="1.6" fill="#ea2a2a"/>
<circle cx="344.9" cy="314.9" r="1.6" fill="#ea2a2a"/>
<circle cx="349.0" cy="314.6" r="1.6" fill="#ea2a2a"/>
<circle cx="353.1" cy="312.9" r="1.6" fill="#ea2a2a"/>
<circle cx="357.1" cy="310.7" r="1.6" fill="#ea2a2a"/>
<circle cx="361.2" cy="308.6" r="1.6" fill="#ea2a2a"/>
<circle cx="365.3" cy="306.5" r="1.6" fill="#ea2a2a"/>
<circle cx="369.3" cy="304.5" r="1.6" fill="#ea2a2a"/>
<circle cx="373.4" cy="302.3" r="1.6" fill="#ea2a2a"/>
<circle cx="377.5" cy="299.2" r="1.6" fill="#ea2a2a"/>
<circle cx="381.5" cy="295.9" r="1.6" fill="#ea2a2a"/>
<circle cx="385.6" cy="291.9" r="1.6" fill="#ea2a2a"/>
<circle cx="389.7" cy="287.4" r="1.6" fill="#ea2a2a"/>
<circle cx="393.7" cy="282.0" r="1.6" fill="#ea2a2a"/>
<circle cx="397.8" cy="276.9" r="1.6" fill="#ea2a2a"/>
<circle cx="401.9" cy="274.0" r="1.6" fill="#ea2a2a"/>
<circle cx="405.9" cy="271.2" r="1.6" fill="#ea2a2a"/>
<circle cx="410.0" cy="269.8" r="1.6" fill="#ea2a2a"/>
<circle cx="414.1" cy="269.1" r="1.6" fill="#ea2a2a"/>
<circle cx="418.1" cy="268.4" r="1.6" fill="#ea2a2a"/>
<circle cx="422.2" cy="268.0" r="1.6" fill="#ea2a2a"/>
<circle cx="426.3" cy="268.0" r="1.6" fill="#ea2a2a"/>
<circle cx="430.3" cy="268.0" r="1.6" fill="#ea2a2a"/>
<circle cx="434.4" cy="268.0" r="1.6" fill="#ea2a2a"/>
<circle cx="438.5" cy="268.8" r="1.6" fill="#ea2a2a"/>
<circle cx="442.5" cy="270.1" r="1.6" fill="#ea2a2a"/>
<circle cx="446.6" cy="271.4" r="1.6" fill="#ea2a2a"/>
<circle cx="450.7" cy="273.1" r="1.6" fill="#ea2a2a"/>
<circle cx="454.7" cy="275.6" r="1.6" fill="#ea2a2a"/>
<circle cx="458.8" cy="278.1" r="1.6" fill="#ea2a2a"/>
<circle cx="462.9" cy="281.3" r="1.6" fill="#ea2a2a"/>
<circle cx="466.9" cy="284.6" r="1.6" fill="#ea2a2a"/>
<circle cx="471.0" cy="287.5" r="1.6" fill="#ea2a2a"/>
<circle cx="475.1" cy="290.1" r="1.6" fill="#ea2a2a"/>
<circle cx="479.1" cy="292.8" r="1.6" fill="#ea2a2a"/>
<circle cx="483.2" cy="295.4" r="1.6" fill="#ea2a2a"/>
<circle cx="487.3" cy="298.0" r="1.6" fill="#ea2a2a"/>
<circle cx="491.4" cy="298.7" r="1.6" fill="#ea2a2a"/>
<circle cx="495.4" cy="299.3" r="1.6" fill="#ea2a2a"/>
<circle cx="499.5" cy="299.7" r="1.6" fill="#ea2a2a"/>
<circle cx="503.6" cy="298.3" r="1.6" fill="#ea2a2a"/>
<circle cx="507.6" cy="297.0" r="1.6" fill="#ea2a2a"/>
<circle cx="511.7" cy="295.6" r="1.6" fill="#ea2a2a"/>
<circle cx="515.8" cy="294.4" r="1.6" fill="#ea2a2a"/>
<circle cx="519.8" cy="293.1" r="1.6" fill="#ea2a2a"/>
<circle cx="523.9" cy="291.8" r="1.6" fill="#ea2a2a"/>
<circle cx="528.0" cy="290.4" r="1.6" fill="#ea2a2a"/>
<circle cx="532.0" cy="288.9" r="1.6" fill="#ea2a2a"/>
<circle cx="536.1" cy="287.4" r="1.6" fill="#ea2a2a"/>
<circle cx="540.2" cy="285.8" r="1.6" fill="#ea2a2a"/>
<circle cx="544.2" cy="283.9" r="1.6" fill="#ea2a2a"/>
<circle cx="548.3" cy="281.8" r="1.6" fill="#ea2a2a"/>
<circle cx="552.4" cy="279.8" r="1.6" fill="#ea2a2a"/>
<circle cx="556.4" cy="277.5" r="1.6" fill="#ea2a2a"/>
<circle cx="560.5" cy="275.0" r="1.6" fill="#ea2a2a"/>
<circle cx="564.6" cy="272.8" r="1.6" fill="#ea2a2a"/>
<circle cx="568.6" cy="271.4" r="1.6" fill="#ea2a2a"/>
<circle cx="572.7" cy="269.9" r="1.6" fill="#ea2a2a"/>
<circle cx="576.8" cy="268.5" r="1.6" fill="#ea2a2a"/>
<circle cx="580.8" cy="268.8" r="1.6" fill="#ea2a2a"/>
<circle cx="584.9" cy="269.1" r="1.6" fill="#ea2a2a"/>
<circle cx="589.0" cy="270.1" r="1.6" fill="#ea2a2a"/>
<circle cx="593.0" cy="271.4" r="1.6" fill="#ea2a2a"/>
<circle cx="597.1" cy="272.8" r="1.6" fill="#ea2a2a"/>
<circle cx="601.2" cy="273.5" r="1.6" fill="#ea2a2a"/>
<circle cx="605.2" cy="274.1" r="1.6" fill="#ea2a2a"/>
<circle cx="609.3" cy="274.7" r="1.6" fill="#ea2a2a"/>
<circle cx="613.4" cy="275.0" r="1.6" fill="#ea2a2a"/>
<circle cx="617.4" cy="275.0" r="1.6" fill="#ea2a2a"/>
<circle cx="621.5" cy="275.2" r="1.6" fill="#ea2a2a"/>
<circle cx="625.6" cy="276.9" r="1.6" fill="#ea2a2a"/>
<circle cx="629.6" cy="278.6" r="1.6" fill="#ea2a2a"/>
<circle cx="633.7" cy="280.5" r="1.6" fill="#ea2a2a"/>
<circle cx="637.8" cy="282.5" r="1.6" fill="#ea2a2a"/>
<circle cx="641.9" cy="283.9" r="1.6" fill="#ea2a2a"/>
<circle cx="645.9" cy="284.6" r="1.6" fill="#ea2a2a"/>
<circle cx="650.0" cy="285.3" r="1.6" fill="#ea2a2a"/>
<circle cx="654.1" cy="285.8" r="1.6" fill="#ea2a2a"/>
<circle cx="658.1" cy="286.2" r="1.6" fill="#ea2a2a"/>
<circle cx="662.2" cy="286.2" r="1.6" fill="#ea2a2a"/>
<circle cx="666.3" cy="285.2" r="1.6" fill="#ea2a2a"/>
<circle cx="670.3" cy="284.3" r="1.6" fill="#ea2a2a"/>
<circle cx="674.4" cy="283.3" r="1.6" fill="#ea2a2a"/>
<circle cx="678.5" cy="282.2" r="1.6" fill="#ea2a2a"/>
<circle cx="682.5" cy="281.2" r="1.6" fill="#ea2a2a"/>
<circle cx="686.6" cy="280.1" r="1.6" fill="#ea2a2a"/>
<circle cx="690.7" cy="280.0" r="1.6" fill="#ea2a2a"/>
<circle cx="694.7" cy="280.2" r="1.6" fill="#ea2a2a"/>
<circle cx="698.8" cy="281.2" r="1.6" fill="#ea2a2a"/>
<circle cx="702.9" cy="282.4" r="1.6" fill="#ea2a2a"/>
<circle cx="706.9" cy="283.7" r="1.6" fill="#ea2a2a"/>
<circle cx="711.0" cy="286.1" r="1.6" fill="#ea2a2a"/>
<circle cx="715.1" cy="288.6" r="1.6" fill="#ea2a2a"/>
<circle cx="719.1" cy="290.8" r="1.6" fill="#ea2a2a"/>
<circle cx="723.2" cy="292.8" r="1.6" fill="#ea2a2a"/>
<circle cx="727.3" cy="294.8" r="1.6" fill="#ea2a2a"/>
<circle cx="731.3" cy="296.1" r="1.6" fill="#ea2a2a"/>
<circle cx="735.4" cy="297.3" r="1.6" fill="#ea2a2a"/>
<circle cx="739.5" cy="298.5" r="1.6" fill="#ea2a2a"/>
<circle cx="743.5" cy="299.5" r="1.6" fill="#ea2a2a"/>
<circle cx="747.6" cy="300.4" r="1.6" fill="#ea2a2a"/>
<circle cx="751.7" cy="301.3" r="1.6" fill="#ea2a2a"/>
<circle cx="755.7" cy="301.7" r="1.6" fill="#ea2a2a"/>
<circle cx="759.8" cy="302.1" r="1.6" fill="#ea2a2a"/>
<circle cx="763.9" cy="302.0" r="1.6" fill="#ea2a2a"/>
<circle cx="767.9" cy="301.2" r="1.6" fill="#ea2a2a"/>
<circle cx="772.0" cy="300.3" r="1.6" fill="#ea2a2a"/>
<circle cx="776.1" cy="298.9" r="1.6" fill="#ea2a2a"/>
<circle cx="780.1" cy="297.2" r="1.6" fill="#ea2a2a"/>
<circle cx="784.2" cy="295.5" r="1.6" fill="#ea2a2a"/>
<circle cx="788.3" cy="294.6" r="1.6" fill="#ea2a2a"/>
<circle cx="792.3" cy="293.9" r="1.6" fill="#ea2a2a"/>
<circle cx="796.4" cy="293.2" r="1.6" fill="#ea2a2a"/>
<circle cx="800.5" cy="292.3" r="1.6" fill="#ea2a2a"/>
<circle cx="804.6" cy="291.3" r="1.6" fill="#ea2a2a"/>
<circle cx="808.6" cy="291.1" r="1.6" fill="#ea2a2a"/>
<circle cx="812.7" cy="291.5" r="1.6" fill="#ea2a2a"/>
<circle cx="816.8" cy="292.4" r="1.6" fill="#ea2a2a"/>
<circle cx="820.8" cy="293.2" r="1.6" fill="#ea2a2a"/>
<circle cx="824.9" cy="293.2" r="1.6" fill="#ea2a2a"/>
<circle cx="829.0" cy="293.2" r="1.6" fill="#ea2a2a"/>
<circle cx="833.0" cy="294.1" r="1.6" fill="#ea2a2a"/>
<circle cx="837.1" cy="295.0" r="1.6" fill="#ea2a2a"/>
<circle cx="841.2" cy="296.7" r="1.6" fill="#ea2a2a"/>
<circle cx="845.2" cy="298.5" r="1.6" fill="#ea2a2a"/>
<circle cx="849.3" cy="301.4" r="1.6" fill="#ea2a2a"/>
<circle cx="853.4" cy="303.7" r="1.6" fill="#ea2a2a"/>
<circle cx="857.4" cy="306.6" r="1.6" fill="#ea2a2a"/>
<circle cx="861.5" cy="309.5" r="1.6" fill="#ea2a2a"/>
<circle cx="865.6" cy="310.6" r="1.6" fill="#ea2a2a"/>
<circle cx="869.6" cy="311.7" r="1.6" fill="#ea2a2a"/>
<circle cx="873.7" cy="311.7" r="1.6" fill="#ea2a2a"/>
<circle cx="877.8" cy="311.7" r="1.6" fill="#ea2a2a"/>
<circle cx="881.8" cy="311.7" r="1.6" fill="#ea2a2a"/>
</g>
<text x="17.8" y="268.5" font-family="Liberation Sans" font-size="11" fill="#2424a8" textLength="28" lengthAdjust="spacingAndGlyphs">MACD</text>
<g clip-path="url(#crsi)">
<line x1="23.5" y1="330.0" x2="23.5" y2="400.5" stroke="#6a7682" stroke-width="1" stroke-dasharray="3,3"/>
<line x1="47.5" y1="330.0" x2="47.5" y2="400.5" stroke="#6a7682" stroke-width="1" stroke-dasharray="3,3"/>
<line x1="72.5" y1="330.0" x2="72.5" y2="400.5" stroke="#6a7682" stroke-width="1" stroke-dasharray="3,3"/>
<line x1="96.5" y1="330.0" x2="96.5" y2="400.5" stroke="#6a7682" stroke-width="1" stroke-dasharray="3,3"/>
<line x1="121.5" y1="330.0" x2="121.5" y2="400.5" stroke="#6a7682" stroke-width="1" stroke-dasharray="3,3"/>
<line x1="145.5" y1="330.0" x2="145.5" y2="400.5" stroke="#6a7682" stroke-width="1" stroke-dasharray="3,3"/>
<line x1="169.5" y1="330.0" x2="169.5" y2="400.5" stroke="#6a7682" stroke-width="1" stroke-dasharray="3,3"/>
<line x1="194.5" y1="330.0" x2="194.5" y2="400.5" stroke="#6a7682" stroke-width="1" stroke-dasharray="3,3"/>
<line x1="218.5" y1="330.0" x2="218.5" y2="400.5" stroke="#6a7682" stroke-width="1" stroke-dasharray="3,3"/>
<line x1="243.5" y1="330.0" x2="243.5" y2="400.5" stroke="#6a7682" stroke-width="1" stroke-dasharray="3,3"/>
<line x1="267.5" y1="330.5" x2="267.5" y2="400.5" stroke="#8c9aa8" stroke-width="1"/>
<line x1="291.5" y1="330.0" x2="291.5" y2="400.5" stroke="#6a7682" stroke-width="1" stroke-dasharray="3,3"/>
<line x1="316.5" y1="330.0" x2="316.5" y2="400.5" stroke="#6a7682" stroke-width="1" stroke-dasharray="3,3"/>
<line x1="340.5" y1="330.0" x2="340.5" y2="400.5" stroke="#6a7682" stroke-width="1" stroke-dasharray="3,3"/>
<line x1="365.5" y1="330.0" x2="365.5" y2="400.5" stroke="#6a7682" stroke-width="1" stroke-dasharray="3,3"/>
<line x1="389.5" y1="330.0" x2="389.5" y2="400.5" stroke="#6a7682" stroke-width="1" stroke-dasharray="3,3"/>
<line x1="413.5" y1="330.0" x2="413.5" y2="400.5" stroke="#6a7682" stroke-width="1" stroke-dasharray="3,3"/>
<line x1="438.5" y1="330.0" x2="438.5" y2="400.5" stroke="#6a7682" stroke-width="1" stroke-dasharray="3,3"/>
<line x1="462.5" y1="330.0" x2="462.5" y2="400.5" stroke="#6a7682" stroke-width="1" stroke-dasharray="3,3"/>
<line x1="487.5" y1="330.0" x2="487.5" y2="400.5" stroke="#6a7682" stroke-width="1" stroke-dasharray="3,3"/>
<line x1="511.5" y1="330.0" x2="511.5" y2="400.5" stroke="#6a7682" stroke-width="1" stroke-dasharray="3,3"/>
<line x1="535.5" y1="330.0" x2="535.5" y2="400.5" stroke="#6a7682" stroke-width="1" stroke-dasharray="3,3"/>
<line x1="560.5" y1="330.0" x2="560.5" y2="400.5" stroke="#6a7682" stroke-width="1" stroke-dasharray="3,3"/>
<line x1="584.5" y1="330.0" x2="584.5" y2="400.5" stroke="#6a7682" stroke-width="1" stroke-dasharray="3,3"/>
<line x1="608.5" y1="330.0" x2="608.5" y2="400.5" stroke="#6a7682" stroke-width="1" stroke-dasharray="3,3"/>
<line x1="633.5" y1="330.0" x2="633.5" y2="400.5" stroke="#6a7682" stroke-width="1" stroke-dasharray="3,3"/>
<line x1="657.5" y1="330.0" x2="657.5" y2="400.5" stroke="#6a7682" stroke-width="1" stroke-dasharray="3,3"/>
<line x1="682.5" y1="330.0" x2="682.5" y2="400.5" stroke="#6a7682" stroke-width="1" stroke-dasharray="3,3"/>
<line x1="706.5" y1="330.0" x2="706.5" y2="400.5" stroke="#6a7682" stroke-width="1" stroke-dasharray="3,3"/>
<line x1="730.5" y1="330.0" x2="730.5" y2="400.5" stroke="#6a7682" stroke-width="1" stroke-dasharray="3,3"/>
<line x1="755.5" y1="330.0" x2="755.5" y2="400.5" stroke="#6a7682" stroke-width="1" stroke-dasharray="3,3"/>
<line x1="779.5" y1="330.5" x2="779.5" y2="400.5" stroke="#8c9aa8" stroke-width="1"/>
<line x1="804.5" y1="330.0" x2="804.5" y2="400.5" stroke="#6a7682" stroke-width="1" stroke-dasharray="3,3"/>
<line x1="828.5" y1="330.0" x2="828.5" y2="400.5" stroke="#6a7682" stroke-width="1" stroke-dasharray="3,3"/>
<line x1="852.5" y1="330.0" x2="852.5" y2="400.5" stroke="#6a7682" stroke-width="1" stroke-dasharray="3,3"/>
<line x1="877.5" y1="330.0" x2="877.5" y2="400.5" stroke="#6a7682" stroke-width="1" stroke-dasharray="3,3"/>
<line x1="15.0" y1="355.5" x2="891.5" y2="355.5" stroke="#6a7682" stroke-width="1" stroke-dasharray="3,3"/>
<line x1="15.0" y1="382.5" x2="891.5" y2="382.5" stroke="#6a7682" stroke-width="1" stroke-dasharray="3,3"/>
<line x1="33" y1="342.8" x2="881" y2="342.8" stroke="#1a1a9c" stroke-width="1.7"/>
<line x1="77" y1="396.6" x2="881" y2="396.6" stroke="#1a1a9c" stroke-width="1.7"/>
<polyline points="15.7,355.7 23.4,363.3 28.1,366.2 32.0,344.2 32.9,341.4 35.8,340.4 38.6,341.4 43.4,342.9 47.2,342.3 51.1,336.6 55.8,335.3 58.7,343.3 60.6,351.9 65.4,354.7 73.0,355.7 80.7,369.1 92.1,357.6 99.8,357.6 104.5,363.3 108.4,348.0 113.1,371.9 124.6,366.2 132.2,352.8 139.9,350.0 143.7,346.1 149.4,345.2 157.1,356.6 162.8,355.7 172.3,360.5 179.0,368.1 182.8,361.4 186.7,365.2 190.5,357.6 196.2,363.3 201.0,365.2 206.7,368.1 213.4,350.9 218.2,344.2 226.7,356.3 231.5,355.7 236.2,357.6 244.8,356.6 250.6,366.2 255.3,373.8 260.1,392.0 263.0,394.8 266.8,387.2 269.7,381.5 283.0,376.7 287.8,372.9 291.6,375.7 300.0,385.0 310.0,388.0 320.0,386.0 330.8,390.0 336.5,383.4 342.2,384.3 346.0,381.5 349.9,365.2 353.7,360.5 356.6,363.3 361.3,358.6 370.9,357.6 376.6,344.2 385.2,333.3 392.8,342.3 398.6,339.1 402.4,339.8 409.1,358.6 412.9,358.6 420.5,349.4 426.3,348.0 432.0,351.9 436.0,358.6 442.4,369.1 447.2,364.3 451.0,365.2 454.8,385.3 458.6,384.3 463.4,380.5 467.2,381.1 470.5,385.3 474.9,378.6 485.4,378.6 491.1,373.8 495.9,360.5 507.3,353.2 515.0,361.4 519.8,355.7 523.6,359.5 528.4,353.8 534.1,355.7 538.9,352.4 542.7,339.5 545.5,338.5 551.3,340.4 556.0,339.5 563.7,336.6 567.5,344.2 572.3,350.0 577.1,350.5 580.9,367.2 584.7,365.2 592.3,363.3 600.0,350.9 608.6,346.1 615.3,350.0 621.0,362.4 624.8,380.5 629.6,371.0 637.2,374.8 642.0,367.2 647.6,360.8 653.4,360.5 661.0,354.4 665.8,345.6 668.6,347.1 673.4,356.3 679.2,352.8 683.0,352.8 686.2,350.5 691.6,361.4 697.3,376.7 704.9,381.5 710.7,378.6 714.5,382.4 722.1,380.5 726.9,376.7 730.7,380.0 738.4,373.8 743.1,394.8 747.0,369.1 752.7,371.9 759.4,369.1 767.0,368.5 771.8,358.9 779.4,358.9 784.2,362.4 788.0,359.5 792.8,361.4 795.7,358.6 800.4,368.1 804.6,364.5 808.7,368.0 811.9,377.7 816.7,376.7 820.5,368.5 827.8,368.5 832.4,371.4 835.3,376.0 840.0,385.0 849.8,392.8 855.6,395.1 860.2,396.3 863.1,377.8 864.8,372.6 869.4,374.9 874.1,371.4 877.5,372.6 881.0,372.6" fill="none" stroke="#e8822a" stroke-width="1"/>
<g clip-path="url(#crsitop)"><polyline points="15.7,355.7 23.4,363.3 28.1,366.2 32.0,344.2 32.9,341.4 35.8,340.4 38.6,341.4 43.4,342.9 47.2,342.3 51.1,336.6 55.8,335.3 58.7,343.3 60.6,351.9 65.4,354.7 73.0,355.7 80.7,369.1 92.1,357.6 99.8,357.6 104.5,363.3 108.4,348.0 113.1,371.9 124.6,366.2 132.2,352.8 139.9,350.0 143.7,346.1 149.4,345.2 157.1,356.6 162.8,355.7 172.3,360.5 179.0,368.1 182.8,361.4 186.7,365.2 190.5,357.6 196.2,363.3 201.0,365.2 206.7,368.1 213.4,350.9 218.2,344.2 226.7,356.3 231.5,355.7 236.2,357.6 244.8,356.6 250.6,366.2 255.3,373.8 260.1,392.0 263.0,394.8 266.8,387.2 269.7,381.5 283.0,376.7 287.8,372.9 291.6,375.7 300.0,385.0 310.0,388.0 320.0,386.0 330.8,390.0 336.5,383.4 342.2,384.3 346.0,381.5 349.9,365.2 353.7,360.5 356.6,363.3 361.3,358.6 370.9,357.6 376.6,344.2 385.2,333.3 392.8,342.3 398.6,339.1 402.4,339.8 409.1,358.6 412.9,358.6 420.5,349.4 426.3,348.0 432.0,351.9 436.0,358.6 442.4,369.1 447.2,364.3 451.0,365.2 454.8,385.3 458.6,384.3 463.4,380.5 467.2,381.1 470.5,385.3 474.9,378.6 485.4,378.6 491.1,373.8 495.9,360.5 507.3,353.2 515.0,361.4 519.8,355.7 523.6,359.5 528.4,353.8 534.1,355.7 538.9,352.4 542.7,339.5 545.5,338.5 551.3,340.4 556.0,339.5 563.7,336.6 567.5,344.2 572.3,350.0 577.1,350.5 580.9,367.2 584.7,365.2 592.3,363.3 600.0,350.9 608.6,346.1 615.3,350.0 621.0,362.4 624.8,380.5 629.6,371.0 637.2,374.8 642.0,367.2 647.6,360.8 653.4,360.5 661.0,354.4 665.8,345.6 668.6,347.1 673.4,356.3 679.2,352.8 683.0,352.8 686.2,350.5 691.6,361.4 697.3,376.7 704.9,381.5 710.7,378.6 714.5,382.4 722.1,380.5 726.9,376.7 730.7,380.0 738.4,373.8 743.1,394.8 747.0,369.1 752.7,371.9 759.4,369.1 767.0,368.5 771.8,358.9 779.4,358.9 784.2,362.4 788.0,359.5 792.8,361.4 795.7,358.6 800.4,368.1 804.6,364.5 808.7,368.0 811.9,377.7 816.7,376.7 820.5,368.5 827.8,368.5 832.4,371.4 835.3,376.0 840.0,385.0 849.8,392.8 855.6,395.1 860.2,396.3 863.1,377.8 864.8,372.6 869.4,374.9 874.1,371.4 877.5,372.6 881.0,372.6" fill="none" stroke="#c030d8" stroke-width="1"/></g>
</g>
<rect x="16" y="332" width="16.5" height="12" fill="#3a4048"/>
<text x="17.8" y="341.8" font-family="Liberation Sans" font-size="11" fill="#f08a30" textLength="14.5" lengthAdjust="spacingAndGlyphs">RSI</text>
<rect x="15.5" y="40.5" width="876.0" height="211.0" fill="none" stroke="#b7c5d1" stroke-width="1"/>
<rect x="15.5" y="257.5" width="876.0" height="67.0" fill="none" stroke="#b7c5d1" stroke-width="1"/>
<rect x="15.5" y="330.5" width="876.0" height="70.0" fill="none" stroke="#b7c5d1" stroke-width="1"/>
<line x1="891" y1="85.5" x2="897" y2="85.5" stroke="#b7c5d1" stroke-width="1"/>
<line x1="891" y1="131.5" x2="897" y2="131.5" stroke="#b7c5d1" stroke-width="1"/>
<line x1="891" y1="178.5" x2="897" y2="178.5" stroke="#b7c5d1" stroke-width="1"/>
<line x1="891" y1="225.5" x2="897" y2="225.5" stroke="#b7c5d1" stroke-width="1"/>
<text x="898.5" y="91.8" font-family="Liberation Sans" font-size="11" fill="#ffffff">1.2200</text>
<text x="898.5" y="138.4" font-family="Liberation Sans" font-size="11" fill="#ffffff">1.2100</text>
<text x="898.5" y="185.3" font-family="Liberation Sans" font-size="11" fill="#ffffff">1.2000</text>
<text x="898.5" y="232.3" font-family="Liberation Sans" font-size="11" fill="#ffffff">1.1900</text>
<line x1="891" y1="296.5" x2="896" y2="296.5" stroke="#b7c5d1" stroke-width="1"/>
<text x="900" y="303" font-family="Liberation Sans" font-size="11" fill="#ffffff">+0.000</text>
<line x1="891" y1="355.5" x2="896" y2="355.5" stroke="#b7c5d1" stroke-width="1"/>
<text x="899" y="361.8" font-family="Liberation Sans" font-size="11" fill="#ffffff">60</text>
<line x1="891" y1="382.5" x2="896" y2="382.5" stroke="#b7c5d1" stroke-width="1"/>
<text x="899" y="388.9" font-family="Liberation Sans" font-size="11" fill="#ffffff">40</text>
<rect x="891" y="90" width="48.5" height="21" fill="#ffffff"/>
<text x="899.5" y="103.8" font-family="Liberation Sans" font-size="11" fill="#404050">1.2165</text>
<line x1="15" y1="400.5" x2="891" y2="400.5" stroke="#b7c5d1" stroke-width="1"/>
<line x1="23.5" y1="400" x2="23.5" y2="404" stroke="#b7c5d1" stroke-width="1"/>
<text x="23.0" y="423" text-anchor="middle" font-family="Liberation Sans" font-size="11" fill="#ffffff" stroke="#ffffff" stroke-width="0.25">19</text>
<line x1="47.5" y1="400" x2="47.5" y2="404" stroke="#b7c5d1" stroke-width="1"/>
<text x="47.4" y="423" text-anchor="middle" font-family="Liberation Sans" font-size="11" fill="#ffffff" stroke="#ffffff" stroke-width="0.25">20</text>
<line x1="72.5" y1="400" x2="72.5" y2="404" stroke="#b7c5d1" stroke-width="1"/>
<text x="71.8" y="423" text-anchor="middle" font-family="Liberation Sans" font-size="11" fill="#ffffff" stroke="#ffffff" stroke-width="0.25">21</text>
<line x1="96.5" y1="400" x2="96.5" y2="404" stroke="#b7c5d1" stroke-width="1"/>
<text x="96.2" y="423" text-anchor="middle" font-family="Liberation Sans" font-size="11" fill="#ffffff" stroke="#ffffff" stroke-width="0.25">22</text>
<line x1="121.5" y1="400" x2="121.5" y2="404" stroke="#b7c5d1" stroke-width="1"/>
<text x="120.6" y="423" text-anchor="middle" font-family="Liberation Sans" font-size="11" fill="#ffffff" stroke="#ffffff" stroke-width="0.25">23</text>
<line x1="145.5" y1="400" x2="145.5" y2="404" stroke="#b7c5d1" stroke-width="1"/>
<text x="144.9" y="423" text-anchor="middle" font-family="Liberation Sans" font-size="11" fill="#ffffff" stroke="#ffffff" stroke-width="0.25">26</text>
<line x1="169.5" y1="400" x2="169.5" y2="404" stroke="#b7c5d1" stroke-width="1"/>
<text x="169.3" y="423" text-anchor="middle" font-family="Liberation Sans" font-size="11" fill="#ffffff" stroke="#ffffff" stroke-width="0.25">27</text>
<line x1="194.5" y1="400" x2="194.5" y2="404" stroke="#b7c5d1" stroke-width="1"/>
<text x="193.7" y="423" text-anchor="middle" font-family="Liberation Sans" font-size="11" fill="#ffffff" stroke="#ffffff" stroke-width="0.25">28</text>
<line x1="218.5" y1="400" x2="218.5" y2="404" stroke="#b7c5d1" stroke-width="1"/>
<text x="218.1" y="423" text-anchor="middle" font-family="Liberation Sans" font-size="11" fill="#ffffff" stroke="#ffffff" stroke-width="0.25">29</text>
<line x1="243.5" y1="400" x2="243.5" y2="404" stroke="#b7c5d1" stroke-width="1"/>
<text x="242.5" y="423" text-anchor="middle" font-family="Liberation Sans" font-size="11" fill="#ffffff" stroke="#ffffff" stroke-width="0.25">30</text>
<line x1="267.5" y1="400" x2="267.5" y2="404" stroke="#b7c5d1" stroke-width="1"/>
<text x="266.9" y="423" text-anchor="middle" font-family="Liberation Sans" font-size="11" fill="#ffffff" stroke="#ffffff" stroke-width="0.25">3</text>
<line x1="291.5" y1="400" x2="291.5" y2="404" stroke="#b7c5d1" stroke-width="1"/>
<text x="291.3" y="423" text-anchor="middle" font-family="Liberation Sans" font-size="11" fill="#ffffff" stroke="#ffffff" stroke-width="0.25">4</text>
<line x1="316.5" y1="400" x2="316.5" y2="404" stroke="#b7c5d1" stroke-width="1"/>
<text x="315.7" y="423" text-anchor="middle" font-family="Liberation Sans" font-size="11" fill="#ffffff" stroke="#ffffff" stroke-width="0.25">5</text>
<line x1="340.5" y1="400" x2="340.5" y2="404" stroke="#b7c5d1" stroke-width="1"/>
<text x="340.1" y="423" text-anchor="middle" font-family="Liberation Sans" font-size="11" fill="#ffffff" stroke="#ffffff" stroke-width="0.25">6</text>
<line x1="365.5" y1="400" x2="365.5" y2="404" stroke="#b7c5d1" stroke-width="1"/>
<text x="364.4" y="423" text-anchor="middle" font-family="Liberation Sans" font-size="11" fill="#ffffff" stroke="#ffffff" stroke-width="0.25">7</text>
<line x1="389.5" y1="400" x2="389.5" y2="404" stroke="#b7c5d1" stroke-width="1"/>
<text x="388.8" y="423" text-anchor="middle" font-family="Liberation Sans" font-size="11" fill="#ffffff" stroke="#ffffff" stroke-width="0.25">10</text>
<line x1="413.5" y1="400" x2="413.5" y2="404" stroke="#b7c5d1" stroke-width="1"/>
<text x="413.2" y="423" text-anchor="middle" font-family="Liberation Sans" font-size="11" fill="#ffffff" stroke="#ffffff" stroke-width="0.25">11</text>
<line x1="438.5" y1="400" x2="438.5" y2="404" stroke="#b7c5d1" stroke-width="1"/>
<text x="437.6" y="423" text-anchor="middle" font-family="Liberation Sans" font-size="11" fill="#ffffff" stroke="#ffffff" stroke-width="0.25">12</text>
<line x1="462.5" y1="400" x2="462.5" y2="404" stroke="#b7c5d1" stroke-width="1"/>
<text x="462.0" y="423" text-anchor="middle" font-family="Liberation Sans" font-size="11" fill="#ffffff" stroke="#ffffff" stroke-width="0.25">13</text>
<line x1="487.5" y1="400" x2="487.5" y2="404" stroke="#b7c5d1" stroke-width="1"/>
<text x="486.4" y="423" text-anchor="middle" font-family="Liberation Sans" font-size="11" fill="#ffffff" stroke="#ffffff" stroke-width="0.25">14</text>
<line x1="511.5" y1="400" x2="511.5" y2="404" stroke="#b7c5d1" stroke-width="1"/>
<text x="510.8" y="423" text-anchor="middle" font-family="Liberation Sans" font-size="11" fill="#ffffff" stroke="#ffffff" stroke-width="0.25">17</text>
<line x1="535.5" y1="400" x2="535.5" y2="404" stroke="#b7c5d1" stroke-width="1"/>
<text x="535.2" y="423" text-anchor="middle" font-family="Liberation Sans" font-size="11" fill="#ffffff" stroke="#ffffff" stroke-width="0.25">18</text>
<line x1="560.5" y1="400" x2="560.5" y2="404" stroke="#b7c5d1" stroke-width="1"/>
<text x="559.6" y="423" text-anchor="middle" font-family="Liberation Sans" font-size="11" fill="#ffffff" stroke="#ffffff" stroke-width="0.25">19</text>
<line x1="584.5" y1="400" x2="584.5" y2="404" stroke="#b7c5d1" stroke-width="1"/>
<text x="584.0" y="423" text-anchor="middle" font-family="Liberation Sans" font-size="11" fill="#ffffff" stroke="#ffffff" stroke-width="0.25">20</text>
<line x1="608.5" y1="400" x2="608.5" y2="404" stroke="#b7c5d1" stroke-width="1"/>
<text x="608.4" y="423" text-anchor="middle" font-family="Liberation Sans" font-size="11" fill="#ffffff" stroke="#ffffff" stroke-width="0.25">21</text>
<line x1="633.5" y1="400" x2="633.5" y2="404" stroke="#b7c5d1" stroke-width="1"/>
<text x="632.7" y="423" text-anchor="middle" font-family="Liberation Sans" font-size="11" fill="#ffffff" stroke="#ffffff" stroke-width="0.25">24</text>
<line x1="657.5" y1="400" x2="657.5" y2="404" stroke="#b7c5d1" stroke-width="1"/>
<text x="657.1" y="423" text-anchor="middle" font-family="Liberation Sans" font-size="11" fill="#ffffff" stroke="#ffffff" stroke-width="0.25">25</text>
<line x1="682.5" y1="400" x2="682.5" y2="404" stroke="#b7c5d1" stroke-width="1"/>
<text x="681.5" y="423" text-anchor="middle" font-family="Liberation Sans" font-size="11" fill="#ffffff" stroke="#ffffff" stroke-width="0.25">26</text>
<line x1="706.5" y1="400" x2="706.5" y2="404" stroke="#b7c5d1" stroke-width="1"/>
<text x="705.9" y="423" text-anchor="middle" font-family="Liberation Sans" font-size="11" fill="#ffffff" stroke="#ffffff" stroke-width="0.25">27</text>
<line x1="730.5" y1="400" x2="730.5" y2="404" stroke="#b7c5d1" stroke-width="1"/>
<text x="730.3" y="423" text-anchor="middle" font-family="Liberation Sans" font-size="11" fill="#ffffff" stroke="#ffffff" stroke-width="0.25">28</text>
<line x1="755.5" y1="400" x2="755.5" y2="404" stroke="#b7c5d1" stroke-width="1"/>
<text x="754.7" y="423" text-anchor="middle" font-family="Liberation Sans" font-size="11" fill="#ffffff" stroke="#ffffff" stroke-width="0.25">31</text>
<line x1="779.5" y1="400" x2="779.5" y2="404" stroke="#b7c5d1" stroke-width="1"/>
<text x="779.1" y="423" text-anchor="middle" font-family="Liberation Sans" font-size="11" fill="#ffffff" stroke="#ffffff" stroke-width="0.25">1</text>
<line x1="804.5" y1="400" x2="804.5" y2="404" stroke="#b7c5d1" stroke-width="1"/>
<text x="803.5" y="423" text-anchor="middle" font-family="Liberation Sans" font-size="11" fill="#ffffff" stroke="#ffffff" stroke-width="0.25">2</text>
<line x1="828.5" y1="400" x2="828.5" y2="404" stroke="#b7c5d1" stroke-width="1"/>
<text x="827.9" y="423" text-anchor="middle" font-family="Liberation Sans" font-size="11" fill="#ffffff" stroke="#ffffff" stroke-width="0.25">3</text>
<line x1="852.5" y1="400" x2="852.5" y2="404" stroke="#b7c5d1" stroke-width="1"/>
<text x="852.2" y="423" text-anchor="middle" font-family="Liberation Sans" font-size="11" fill="#ffffff" stroke="#ffffff" stroke-width="0.25">4</text>
<line x1="877.5" y1="400" x2="877.5" y2="404" stroke="#b7c5d1" stroke-width="1"/>
<text x="876.6" y="423" text-anchor="middle" font-family="Liberation Sans" font-size="11" fill="#ffffff" stroke="#ffffff" stroke-width="0.25">7</text>
<linearGradient id="bg" x1="0" y1="0" x2="0" y2="1"><stop offset="0" stop-color="#6a7890"/><stop offset="1" stop-color="#56647a"/></linearGradient>
<line x1="16.0" y1="376" x2="16.0" y2="404" stroke="#c8dce4" stroke-width="2"/>
<path d="M15.5,377.5 H75.5 Q77.5,377.5 77.5,379.5 V394.5 Q77.5,396.5 75.5,396.5 H15.5 Z" fill="url(#bg)" stroke="#c4d4dc" stroke-width="1"/>
<text x="47.2" y="391" text-anchor="middle" font-family="Liberation Sans" font-size="11" fill="#ffffff">Апр 2021</text>
<line x1="268.0" y1="376" x2="268.0" y2="404" stroke="#c8dce4" stroke-width="2"/>
<path d="M267.5,377.5 H328.5 Q330.5,377.5 330.5,379.5 V394.5 Q330.5,396.5 328.5,396.5 H267.5 Z" fill="url(#bg)" stroke="#c4d4dc" stroke-width="1"/>
<text x="299.8" y="391" text-anchor="middle" font-family="Liberation Sans" font-size="11" fill="#ffffff">Май 2021</text>
<line x1="780.0" y1="376" x2="780.0" y2="404" stroke="#c8dce4" stroke-width="2"/>
<path d="M779.5,377.5 H847.5 Q849.5,377.5 849.5,379.5 V394.5 Q849.5,396.5 847.5,396.5 H779.5 Z" fill="url(#bg)" stroke="#c4d4dc" stroke-width="1"/>
<text x="815.2" y="391" text-anchor="middle" font-family="Liberation Sans" font-size="11" fill="#ffffff">Июнь 2021</text>
</svg>
</body></html>
